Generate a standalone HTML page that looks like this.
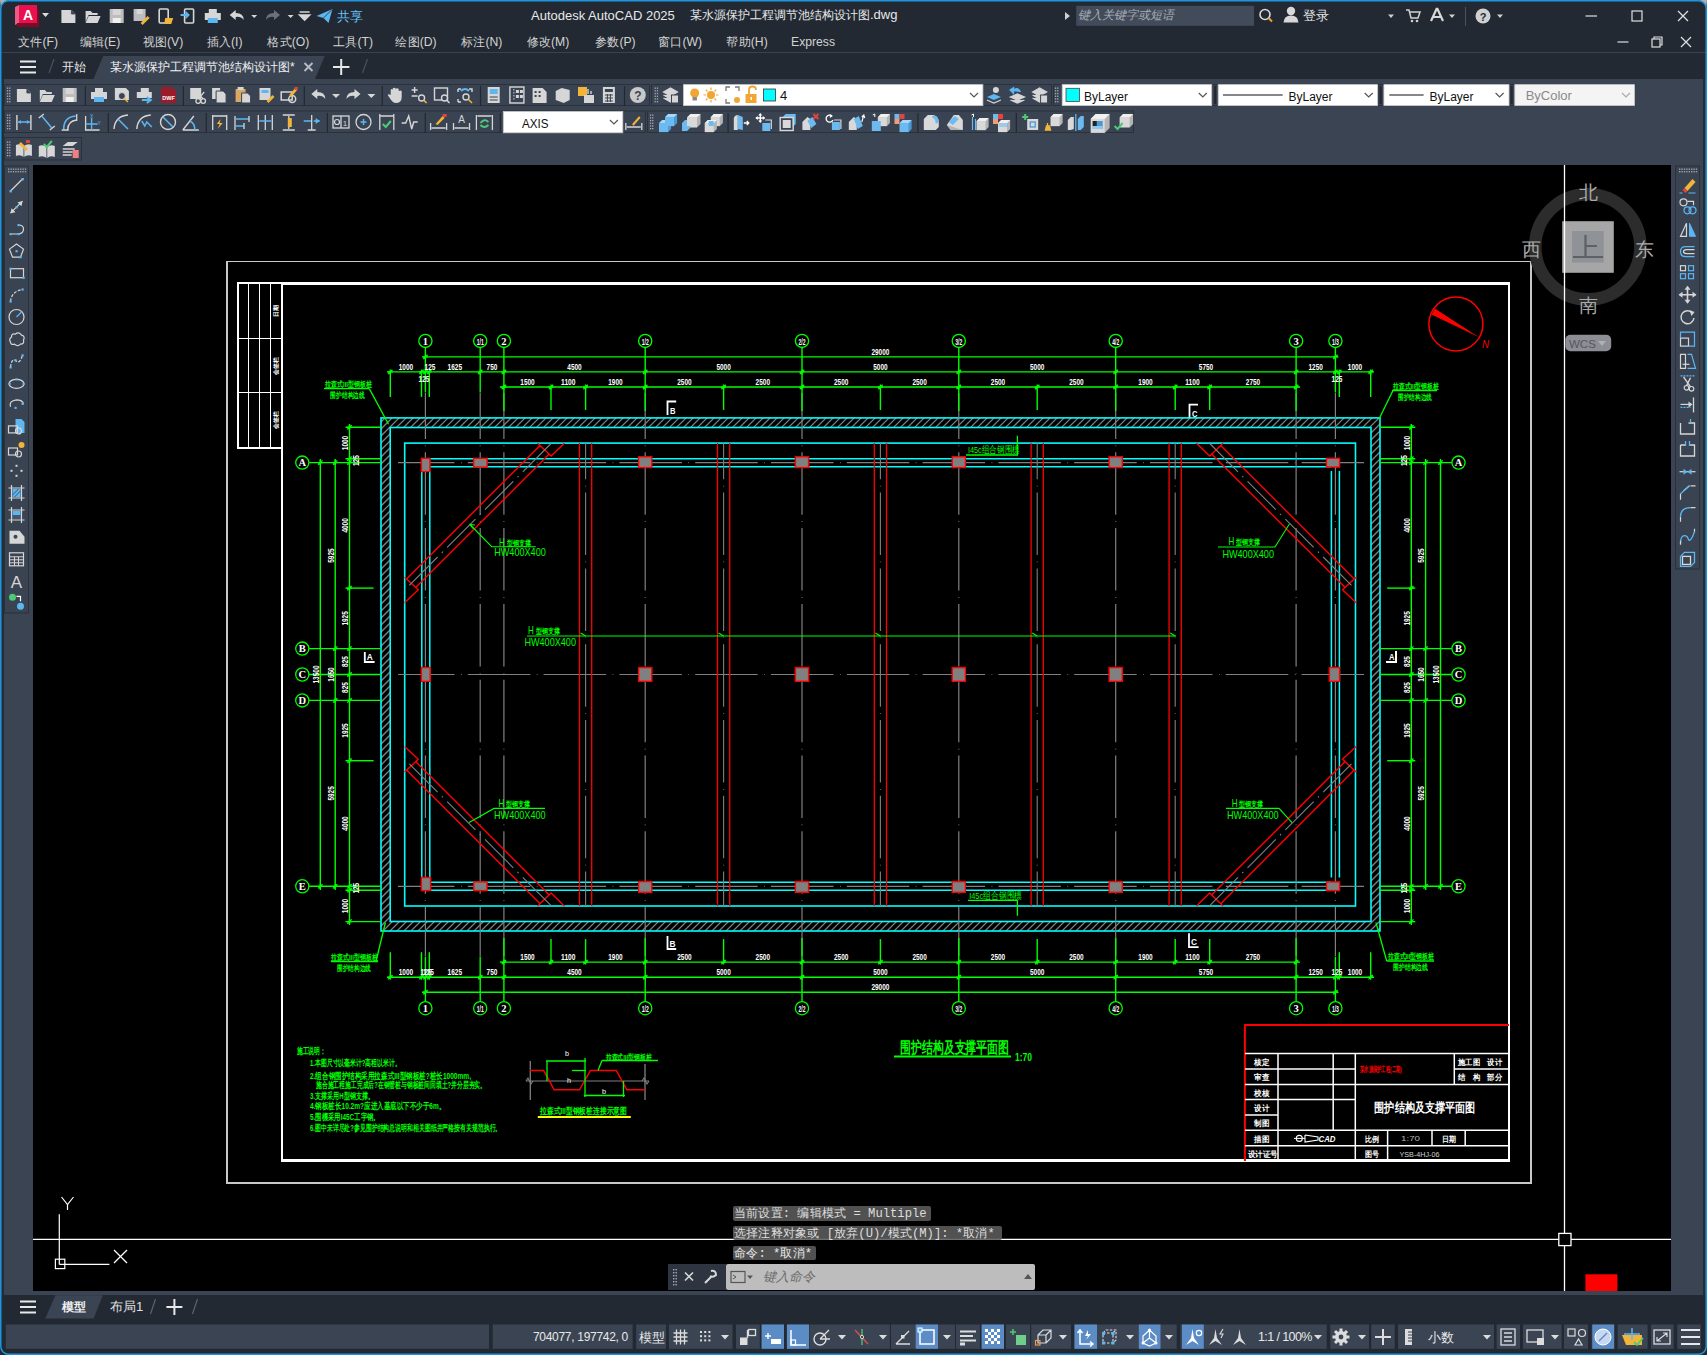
<!DOCTYPE html><html><head><meta charset="utf-8"><style>body{margin:0;width:1707px;height:1355px;overflow:hidden;background:#222933;font-family:"Liberation Sans",sans-serif;position:relative}svg{overflow:hidden}</style></head><body>
<div style="position:absolute;left:0px;top:0px;width:1707px;height:1355px;background:#222933"></div>
<div style="position:absolute;left:0px;top:79px;width:1707px;height:86px;background:#3b4453"></div>
<div style="position:absolute;left:0px;top:165px;width:33px;height:1126px;background:#3b4453"></div>
<div style="position:absolute;left:1671px;top:165px;width:36px;height:1126px;background:#3b4453"></div>
<div style="position:absolute;left:33px;top:165px;width:1638px;height:1126px;background:#000"></div>
<div style="position:absolute;left:0px;top:52px;width:1707px;height:1px;background:#3a4250"></div>
<svg width="1707" height="1355" style="position:absolute;left:0;top:0" font-family='"Liberation Sans", sans-serif'>
<defs><clipPath id="dclip"><rect x="33" y="165" width="1638" height="1126"/></clipPath><clipPath id="hclip"><path d="M381,417.9 H1380 V931 H381 Z M390.2,427.5 V921.5 H1371 V427.5 Z" clip-rule="evenodd"/></clipPath></defs>
<g clip-path="url(#dclip)" shape-rendering="crispEdges">
<rect x="227.0" y="261.5" width="1304.0" height="921.5" stroke="#c8c8c8" stroke-width="1.2" fill="none" />
<rect x="282.0" y="283.5" width="1227.0" height="877.0" stroke="#ffffff" stroke-width="2.5" fill="none" />
<rect x="237.5" y="282.5" width="44.0" height="165.5" stroke="#ffffff" stroke-width="2" fill="none" />
<line x1="248.6" y1="284.0" x2="248.6" y2="448.0" stroke="#ffffff" stroke-width="1" />
<line x1="259.8" y1="284.0" x2="259.8" y2="448.0" stroke="#ffffff" stroke-width="1" />
<line x1="270.8" y1="284.0" x2="270.8" y2="448.0" stroke="#ffffff" stroke-width="1" />
<line x1="237.0" y1="338.0" x2="281.0" y2="338.0" stroke="#ffffff" stroke-width="1" />
<line x1="237.0" y1="392.5" x2="281.0" y2="392.5" stroke="#ffffff" stroke-width="1" />
</g>
<g clip-path="url(#dclip)">
<path d="M-219,931 L295,417 M-212,931 L302,417 M-205,931 L309,417 M-198,931 L316,417 M-191,931 L323,417 M-184,931 L330,417 M-177,931 L337,417 M-170,931 L344,417 M-163,931 L351,417 M-156,931 L358,417 M-149,931 L365,417 M-142,931 L372,417 M-135,931 L379,417 M-128,931 L386,417 M-121,931 L393,417 M-114,931 L400,417 M-107,931 L407,417 M-100,931 L414,417 M-93,931 L421,417 M-86,931 L428,417 M-79,931 L435,417 M-72,931 L442,417 M-65,931 L449,417 M-58,931 L456,417 M-51,931 L463,417 M-44,931 L470,417 M-37,931 L477,417 M-30,931 L484,417 M-23,931 L491,417 M-16,931 L498,417 M-9,931 L505,417 M-2,931 L512,417 M5,931 L519,417 M12,931 L526,417 M19,931 L533,417 M26,931 L540,417 M33,931 L547,417 M40,931 L554,417 M47,931 L561,417 M54,931 L568,417 M61,931 L575,417 M68,931 L582,417 M75,931 L589,417 M82,931 L596,417 M89,931 L603,417 M96,931 L610,417 M103,931 L617,417 M110,931 L624,417 M117,931 L631,417 M124,931 L638,417 M131,931 L645,417 M138,931 L652,417 M145,931 L659,417 M152,931 L666,417 M159,931 L673,417 M166,931 L680,417 M173,931 L687,417 M180,931 L694,417 M187,931 L701,417 M194,931 L708,417 M201,931 L715,417 M208,931 L722,417 M215,931 L729,417 M222,931 L736,417 M229,931 L743,417 M236,931 L750,417 M243,931 L757,417 M250,931 L764,417 M257,931 L771,417 M264,931 L778,417 M271,931 L785,417 M278,931 L792,417 M285,931 L799,417 M292,931 L806,417 M299,931 L813,417 M306,931 L820,417 M313,931 L827,417 M320,931 L834,417 M327,931 L841,417 M334,931 L848,417 M341,931 L855,417 M348,931 L862,417 M355,931 L869,417 M362,931 L876,417 M369,931 L883,417 M376,931 L890,417 M383,931 L897,417 M390,931 L904,417 M397,931 L911,417 M404,931 L918,417 M411,931 L925,417 M418,931 L932,417 M425,931 L939,417 M432,931 L946,417 M439,931 L953,417 M446,931 L960,417 M453,931 L967,417 M460,931 L974,417 M467,931 L981,417 M474,931 L988,417 M481,931 L995,417 M488,931 L1002,417 M495,931 L1009,417 M502,931 L1016,417 M509,931 L1023,417 M516,931 L1030,417 M523,931 L1037,417 M530,931 L1044,417 M537,931 L1051,417 M544,931 L1058,417 M551,931 L1065,417 M558,931 L1072,417 M565,931 L1079,417 M572,931 L1086,417 M579,931 L1093,417 M586,931 L1100,417 M593,931 L1107,417 M600,931 L1114,417 M607,931 L1121,417 M614,931 L1128,417 M621,931 L1135,417 M628,931 L1142,417 M635,931 L1149,417 M642,931 L1156,417 M649,931 L1163,417 M656,931 L1170,417 M663,931 L1177,417 M670,931 L1184,417 M677,931 L1191,417 M684,931 L1198,417 M691,931 L1205,417 M698,931 L1212,417 M705,931 L1219,417 M712,931 L1226,417 M719,931 L1233,417 M726,931 L1240,417 M733,931 L1247,417 M740,931 L1254,417 M747,931 L1261,417 M754,931 L1268,417 M761,931 L1275,417 M768,931 L1282,417 M775,931 L1289,417 M782,931 L1296,417 M789,931 L1303,417 M796,931 L1310,417 M803,931 L1317,417 M810,931 L1324,417 M817,931 L1331,417 M824,931 L1338,417 M831,931 L1345,417 M838,931 L1352,417 M845,931 L1359,417 M852,931 L1366,417 M859,931 L1373,417 M866,931 L1380,417 M873,931 L1387,417 M880,931 L1394,417 M887,931 L1401,417 M894,931 L1408,417 M901,931 L1415,417 M908,931 L1422,417 M915,931 L1429,417 M922,931 L1436,417 M929,931 L1443,417 M936,931 L1450,417 M943,931 L1457,417 M950,931 L1464,417 M957,931 L1471,417 M964,931 L1478,417 M971,931 L1485,417 M978,931 L1492,417 M985,931 L1499,417 M992,931 L1506,417 M999,931 L1513,417 M1006,931 L1520,417 M1013,931 L1527,417 M1020,931 L1534,417 M1027,931 L1541,417 M1034,931 L1548,417 M1041,931 L1555,417 M1048,931 L1562,417 M1055,931 L1569,417 M1062,931 L1576,417 M1069,931 L1583,417 M1076,931 L1590,417 M1083,931 L1597,417 M1090,931 L1604,417 M1097,931 L1611,417 M1104,931 L1618,417 M1111,931 L1625,417 M1118,931 L1632,417 M1125,931 L1639,417 M1132,931 L1646,417 M1139,931 L1653,417 M1146,931 L1660,417 M1153,931 L1667,417 M1160,931 L1674,417 M1167,931 L1681,417 M1174,931 L1688,417 M1181,931 L1695,417 M1188,931 L1702,417 M1195,931 L1709,417 M1202,931 L1716,417 M1209,931 L1723,417 M1216,931 L1730,417 M1223,931 L1737,417 M1230,931 L1744,417 M1237,931 L1751,417 M1244,931 L1758,417 M1251,931 L1765,417 M1258,931 L1772,417 M1265,931 L1779,417 M1272,931 L1786,417 M1279,931 L1793,417 M1286,931 L1800,417 M1293,931 L1807,417 M1300,931 L1814,417 M1307,931 L1821,417 M1314,931 L1828,417 M1321,931 L1835,417 M1328,931 L1842,417 M1335,931 L1849,417 M1342,931 L1856,417 M1349,931 L1863,417 M1356,931 L1870,417 M1363,931 L1877,417 M1370,931 L1884,417 M1377,931 L1891,417 M1384,931 L1898,417 M1391,931 L1905,417 M1398,931 L1912,417 M1405,931 L1919,417 M1412,931 L1926,417 M1419,931 L1933,417 M1426,931 L1940,417 M1433,931 L1947,417 M1440,931 L1954,417 M1447,931 L1961,417 M1454,931 L1968,417 M1461,931 L1975,417 M1468,931 L1982,417 M1475,931 L1989,417" stroke="#808080" stroke-width="1.25" clip-path="url(#hclip)"/>
<rect x="381.0" y="417.9" width="999.0" height="513.1" stroke="#00ffff" stroke-width="1.6" fill="none" />
<rect x="390.2" y="427.5" width="980.8" height="494.0" stroke="#00ffff" stroke-width="1.6" fill="none" />
<rect x="404.7" y="443.1" width="950.8" height="462.9" stroke="#00ffff" stroke-width="1.6" fill="none" />
<line x1="430.3" y1="458.8" x2="1331.0" y2="458.8" stroke="#00ffff" stroke-width="1.5" />
<line x1="430.3" y1="466.7" x2="1331.0" y2="466.7" stroke="#00ffff" stroke-width="1.5" />
<line x1="430.3" y1="882.3" x2="1331.0" y2="882.3" stroke="#00ffff" stroke-width="1.5" />
<line x1="430.3" y1="890.3" x2="1331.0" y2="890.3" stroke="#00ffff" stroke-width="1.5" />
<line x1="421.8" y1="471.0" x2="421.8" y2="877.5" stroke="#00ffff" stroke-width="1.5" />
<line x1="429.8" y1="471.0" x2="429.8" y2="877.5" stroke="#00ffff" stroke-width="1.5" />
<line x1="1331.4" y1="471.0" x2="1331.4" y2="877.5" stroke="#00ffff" stroke-width="1.5" />
<line x1="1339.4" y1="471.0" x2="1339.4" y2="877.5" stroke="#00ffff" stroke-width="1.5" />
<line x1="425.4" y1="393.0" x2="425.4" y2="956.0" stroke="#808080" stroke-width="1.2" stroke-dasharray="62.5 6.5 0.7 6.1" stroke-dashoffset="16.5"/>
<line x1="480.2" y1="393.0" x2="480.2" y2="956.0" stroke="#808080" stroke-width="1.2" stroke-dasharray="62.5 6.5 0.7 6.1" stroke-dashoffset="16.5"/>
<line x1="503.9" y1="393.0" x2="503.9" y2="956.0" stroke="#808080" stroke-width="1.2" stroke-dasharray="62.5 6.5 0.7 6.1" stroke-dashoffset="16.5"/>
<line x1="645.2" y1="393.0" x2="645.2" y2="956.0" stroke="#808080" stroke-width="1.2" stroke-dasharray="62.5 6.5 0.7 6.1" stroke-dashoffset="16.5"/>
<line x1="802.0" y1="393.0" x2="802.0" y2="956.0" stroke="#808080" stroke-width="1.2" stroke-dasharray="62.5 6.5 0.7 6.1" stroke-dashoffset="16.5"/>
<line x1="958.8" y1="393.0" x2="958.8" y2="956.0" stroke="#808080" stroke-width="1.2" stroke-dasharray="62.5 6.5 0.7 6.1" stroke-dashoffset="16.5"/>
<line x1="1115.7" y1="393.0" x2="1115.7" y2="956.0" stroke="#808080" stroke-width="1.2" stroke-dasharray="62.5 6.5 0.7 6.1" stroke-dashoffset="16.5"/>
<line x1="1296.1" y1="393.0" x2="1296.1" y2="956.0" stroke="#808080" stroke-width="1.2" stroke-dasharray="62.5 6.5 0.7 6.1" stroke-dashoffset="16.5"/>
<line x1="1335.4" y1="393.0" x2="1335.4" y2="956.0" stroke="#808080" stroke-width="1.2" stroke-dasharray="62.5 6.5 0.7 6.1" stroke-dashoffset="16.5"/>
<line x1="398.0" y1="462.6" x2="1364.0" y2="462.6" stroke="#808080" stroke-width="1.2" stroke-dasharray="62.5 6.5 0.7 6.1" stroke-dashoffset="6"/>
<line x1="398.0" y1="674.5" x2="1364.0" y2="674.5" stroke="#808080" stroke-width="1.2" stroke-dasharray="62.5 6.5 0.7 6.1" stroke-dashoffset="6"/>
<line x1="398.0" y1="886.3" x2="1364.0" y2="886.3" stroke="#808080" stroke-width="1.2" stroke-dasharray="62.5 6.5 0.7 6.1" stroke-dashoffset="6"/>
<line x1="579.5" y1="443.0" x2="579.5" y2="906.0" stroke="#ff0000" stroke-width="1.3" />
<line x1="591.7" y1="443.0" x2="591.7" y2="906.0" stroke="#ff0000" stroke-width="1.3" />
<line x1="585.6" y1="443.0" x2="585.6" y2="906.0" stroke="#808080" stroke-width="1.1" stroke-dasharray="62.5 6.5 0.7 6.1" stroke-dashoffset="26.2"/>
<line x1="717.5" y1="443.0" x2="717.5" y2="906.0" stroke="#ff0000" stroke-width="1.3" />
<line x1="729.7" y1="443.0" x2="729.7" y2="906.0" stroke="#ff0000" stroke-width="1.3" />
<line x1="723.6" y1="443.0" x2="723.6" y2="906.0" stroke="#808080" stroke-width="1.1" stroke-dasharray="62.5 6.5 0.7 6.1" stroke-dashoffset="26.2"/>
<line x1="874.3" y1="443.0" x2="874.3" y2="906.0" stroke="#ff0000" stroke-width="1.3" />
<line x1="886.5" y1="443.0" x2="886.5" y2="906.0" stroke="#ff0000" stroke-width="1.3" />
<line x1="880.4" y1="443.0" x2="880.4" y2="906.0" stroke="#808080" stroke-width="1.1" stroke-dasharray="62.5 6.5 0.7 6.1" stroke-dashoffset="26.2"/>
<line x1="1031.1" y1="443.0" x2="1031.1" y2="906.0" stroke="#ff0000" stroke-width="1.3" />
<line x1="1043.3" y1="443.0" x2="1043.3" y2="906.0" stroke="#ff0000" stroke-width="1.3" />
<line x1="1037.2" y1="443.0" x2="1037.2" y2="906.0" stroke="#808080" stroke-width="1.1" stroke-dasharray="62.5 6.5 0.7 6.1" stroke-dashoffset="26.2"/>
<line x1="1169.1" y1="443.0" x2="1169.1" y2="906.0" stroke="#ff0000" stroke-width="1.3" />
<line x1="1181.3" y1="443.0" x2="1181.3" y2="906.0" stroke="#ff0000" stroke-width="1.3" />
<line x1="1175.2" y1="443.0" x2="1175.2" y2="906.0" stroke="#808080" stroke-width="1.1" stroke-dasharray="62.5 6.5 0.7 6.1" stroke-dashoffset="26.2"/>
<polyline points="540.1,445.4 406.8,578.8" fill="none" stroke="#ff0000" stroke-width="1.4" /><polyline points="549.0,454.3 415.6,587.6" fill="none" stroke="#ff0000" stroke-width="1.4" /><polyline points="537.7,443.2 551.1,456.1 564.3,443.2" fill="none" stroke="#ff0000" stroke-width="1.4" /><polyline points="404.6,577.2 418.3,589.8 404.6,602.7" fill="none" stroke="#ff0000" stroke-width="1.4" /><polyline points="551.1,443.5 404.6,590.0" fill="none" stroke="#808080" stroke-width="1.1" stroke-dasharray="40 6 1.5 6"/>
<polyline points="540.1,903.7 406.8,770.3" fill="none" stroke="#ff0000" stroke-width="1.4" /><polyline points="549.0,894.8 415.6,761.5" fill="none" stroke="#ff0000" stroke-width="1.4" /><polyline points="537.7,905.9 551.1,893.0 564.3,905.9" fill="none" stroke="#ff0000" stroke-width="1.4" /><polyline points="404.6,771.9 418.3,759.3 404.6,746.4" fill="none" stroke="#ff0000" stroke-width="1.4" /><polyline points="551.1,905.6 404.6,759.1" fill="none" stroke="#808080" stroke-width="1.1" stroke-dasharray="40 6 1.5 6"/>
<polyline points="1220.7,445.4 1354.0,578.8" fill="none" stroke="#ff0000" stroke-width="1.4" /><polyline points="1211.8,454.3 1345.2,587.6" fill="none" stroke="#ff0000" stroke-width="1.4" /><polyline points="1223.1,443.2 1209.7,456.1 1196.5,443.2" fill="none" stroke="#ff0000" stroke-width="1.4" /><polyline points="1356.2,577.2 1342.5,589.8 1356.2,602.7" fill="none" stroke="#ff0000" stroke-width="1.4" /><polyline points="1209.7,443.5 1356.2,590.0" fill="none" stroke="#808080" stroke-width="1.1" stroke-dasharray="40 6 1.5 6"/>
<polyline points="1220.7,903.7 1354.0,770.3" fill="none" stroke="#ff0000" stroke-width="1.4" /><polyline points="1211.8,894.8 1345.2,761.5" fill="none" stroke="#ff0000" stroke-width="1.4" /><polyline points="1223.1,905.9 1209.7,893.0 1196.5,905.9" fill="none" stroke="#ff0000" stroke-width="1.4" /><polyline points="1356.2,771.9 1342.5,759.3 1356.2,746.4" fill="none" stroke="#ff0000" stroke-width="1.4" /><polyline points="1209.7,905.6 1356.2,759.1" fill="none" stroke="#808080" stroke-width="1.1" stroke-dasharray="40 6 1.5 6"/>
<rect x="421.4" y="458.3" width="8.6" height="13.2" stroke="#ff0000" stroke-width="1.4" fill="#808080" />
<rect x="473.7" y="458.3" width="13.4" height="8.8" stroke="#ff0000" stroke-width="1.4" fill="#808080" />
<rect x="1326.5" y="458.3" width="13.1" height="8.8" stroke="#ff0000" stroke-width="1.4" fill="#808080" />
<rect x="638.6" y="456.8" width="13.2" height="10.8" stroke="#ff0000" stroke-width="1.4" fill="#808080" />
<rect x="795.4" y="456.8" width="13.2" height="10.8" stroke="#ff0000" stroke-width="1.4" fill="#808080" />
<rect x="952.2" y="456.8" width="13.2" height="10.8" stroke="#ff0000" stroke-width="1.4" fill="#808080" />
<rect x="1109.1" y="456.8" width="13.2" height="10.8" stroke="#ff0000" stroke-width="1.4" fill="#808080" />
<rect x="421.4" y="667.6" width="8.8" height="13.7" stroke="#ff0000" stroke-width="1.4" fill="#808080" />
<rect x="1329.4" y="667.6" width="10.2" height="13.7" stroke="#ff0000" stroke-width="1.4" fill="#808080" />
<rect x="638.6" y="667.6" width="13.2" height="13.7" stroke="#ff0000" stroke-width="1.4" fill="#808080" />
<rect x="795.4" y="667.6" width="13.2" height="13.7" stroke="#ff0000" stroke-width="1.4" fill="#808080" />
<rect x="952.2" y="667.6" width="13.2" height="13.7" stroke="#ff0000" stroke-width="1.4" fill="#808080" />
<rect x="1109.1" y="667.6" width="13.2" height="13.7" stroke="#ff0000" stroke-width="1.4" fill="#808080" />
<rect x="421.4" y="877.5" width="9.2" height="13.1" stroke="#ff0000" stroke-width="1.4" fill="#808080" />
<rect x="473.8" y="881.9" width="13.2" height="8.7" stroke="#ff0000" stroke-width="1.4" fill="#808080" />
<rect x="1326.5" y="881.9" width="13.1" height="8.7" stroke="#ff0000" stroke-width="1.4" fill="#808080" />
<rect x="638.6" y="881.6" width="13.2" height="10.7" stroke="#ff0000" stroke-width="1.4" fill="#808080" />
<rect x="795.4" y="881.6" width="13.2" height="10.7" stroke="#ff0000" stroke-width="1.4" fill="#808080" />
<rect x="952.2" y="881.6" width="13.2" height="10.7" stroke="#ff0000" stroke-width="1.4" fill="#808080" />
<rect x="1109.1" y="881.6" width="13.2" height="10.7" stroke="#ff0000" stroke-width="1.4" fill="#808080" />
</g>
<g clip-path="url(#dclip)">
<line x1="425.4" y1="347.5" x2="425.4" y2="392.5" stroke="#00ff00" stroke-width="1.4" />
<line x1="425.4" y1="1001.6" x2="425.4" y2="956.6" stroke="#00ff00" stroke-width="1.4" />
<circle cx="425.4" cy="340.9" r="6.6" stroke="#00ff00" stroke-width="1.3" fill="none"/><text x="425.4" y="344.7" font-size="10.5" fill="#ffffff" text-anchor="middle" font-family="Liberation Serif" font-weight="bold">1</text>
<circle cx="425.4" cy="1008.2" r="6.6" stroke="#00ff00" stroke-width="1.3" fill="none"/><text x="425.4" y="1012.0" font-size="10.5" fill="#ffffff" text-anchor="middle" font-family="Liberation Serif" font-weight="bold">1</text>
<line x1="480.2" y1="347.5" x2="480.2" y2="392.5" stroke="#00ff00" stroke-width="1.4" />
<line x1="480.2" y1="1001.6" x2="480.2" y2="956.6" stroke="#00ff00" stroke-width="1.4" />
<circle cx="480.2" cy="340.9" r="6.6" stroke="#00ff00" stroke-width="1.3" fill="none"/><text x="480.2" y="344.5" font-size="9" fill="#ffffff" text-anchor="middle" font-weight="bold" textLength="7" lengthAdjust="spacingAndGlyphs">1/1</text>
<circle cx="480.2" cy="1008.2" r="6.6" stroke="#00ff00" stroke-width="1.3" fill="none"/><text x="480.2" y="1011.8" font-size="9" fill="#ffffff" text-anchor="middle" font-weight="bold" textLength="7" lengthAdjust="spacingAndGlyphs">1/1</text>
<line x1="503.9" y1="347.5" x2="503.9" y2="411.0" stroke="#00ff00" stroke-width="1.4" />
<line x1="503.9" y1="1001.6" x2="503.9" y2="938.1" stroke="#00ff00" stroke-width="1.4" />
<circle cx="503.9" cy="340.9" r="6.6" stroke="#00ff00" stroke-width="1.3" fill="none"/><text x="503.9" y="344.7" font-size="10.5" fill="#ffffff" text-anchor="middle" font-family="Liberation Serif" font-weight="bold">2</text>
<circle cx="503.9" cy="1008.2" r="6.6" stroke="#00ff00" stroke-width="1.3" fill="none"/><text x="503.9" y="1012.0" font-size="10.5" fill="#ffffff" text-anchor="middle" font-family="Liberation Serif" font-weight="bold">2</text>
<line x1="645.2" y1="347.5" x2="645.2" y2="411.0" stroke="#00ff00" stroke-width="1.4" />
<line x1="645.2" y1="1001.6" x2="645.2" y2="938.1" stroke="#00ff00" stroke-width="1.4" />
<circle cx="645.2" cy="340.9" r="6.6" stroke="#00ff00" stroke-width="1.3" fill="none"/><text x="645.2" y="344.5" font-size="9" fill="#ffffff" text-anchor="middle" font-weight="bold" textLength="7" lengthAdjust="spacingAndGlyphs">1/2</text>
<circle cx="645.2" cy="1008.2" r="6.6" stroke="#00ff00" stroke-width="1.3" fill="none"/><text x="645.2" y="1011.8" font-size="9" fill="#ffffff" text-anchor="middle" font-weight="bold" textLength="7" lengthAdjust="spacingAndGlyphs">1/2</text>
<line x1="802.0" y1="347.5" x2="802.0" y2="411.0" stroke="#00ff00" stroke-width="1.4" />
<line x1="802.0" y1="1001.6" x2="802.0" y2="938.1" stroke="#00ff00" stroke-width="1.4" />
<circle cx="802.0" cy="340.9" r="6.6" stroke="#00ff00" stroke-width="1.3" fill="none"/><text x="802.0" y="344.5" font-size="9" fill="#ffffff" text-anchor="middle" font-weight="bold" textLength="7" lengthAdjust="spacingAndGlyphs">2/2</text>
<circle cx="802.0" cy="1008.2" r="6.6" stroke="#00ff00" stroke-width="1.3" fill="none"/><text x="802.0" y="1011.8" font-size="9" fill="#ffffff" text-anchor="middle" font-weight="bold" textLength="7" lengthAdjust="spacingAndGlyphs">2/2</text>
<line x1="958.8" y1="347.5" x2="958.8" y2="411.0" stroke="#00ff00" stroke-width="1.4" />
<line x1="958.8" y1="1001.6" x2="958.8" y2="938.1" stroke="#00ff00" stroke-width="1.4" />
<circle cx="958.8" cy="340.9" r="6.6" stroke="#00ff00" stroke-width="1.3" fill="none"/><text x="958.8" y="344.5" font-size="9" fill="#ffffff" text-anchor="middle" font-weight="bold" textLength="7" lengthAdjust="spacingAndGlyphs">3/2</text>
<circle cx="958.8" cy="1008.2" r="6.6" stroke="#00ff00" stroke-width="1.3" fill="none"/><text x="958.8" y="1011.8" font-size="9" fill="#ffffff" text-anchor="middle" font-weight="bold" textLength="7" lengthAdjust="spacingAndGlyphs">3/2</text>
<line x1="1115.7" y1="347.5" x2="1115.7" y2="411.0" stroke="#00ff00" stroke-width="1.4" />
<line x1="1115.7" y1="1001.6" x2="1115.7" y2="938.1" stroke="#00ff00" stroke-width="1.4" />
<circle cx="1115.7" cy="340.9" r="6.6" stroke="#00ff00" stroke-width="1.3" fill="none"/><text x="1115.7" y="344.5" font-size="9" fill="#ffffff" text-anchor="middle" font-weight="bold" textLength="7" lengthAdjust="spacingAndGlyphs">4/2</text>
<circle cx="1115.7" cy="1008.2" r="6.6" stroke="#00ff00" stroke-width="1.3" fill="none"/><text x="1115.7" y="1011.8" font-size="9" fill="#ffffff" text-anchor="middle" font-weight="bold" textLength="7" lengthAdjust="spacingAndGlyphs">4/2</text>
<line x1="1296.1" y1="347.5" x2="1296.1" y2="411.0" stroke="#00ff00" stroke-width="1.4" />
<line x1="1296.1" y1="1001.6" x2="1296.1" y2="938.1" stroke="#00ff00" stroke-width="1.4" />
<circle cx="1296.1" cy="340.9" r="6.6" stroke="#00ff00" stroke-width="1.3" fill="none"/><text x="1296.1" y="344.7" font-size="10.5" fill="#ffffff" text-anchor="middle" font-family="Liberation Serif" font-weight="bold">3</text>
<circle cx="1296.1" cy="1008.2" r="6.6" stroke="#00ff00" stroke-width="1.3" fill="none"/><text x="1296.1" y="1012.0" font-size="10.5" fill="#ffffff" text-anchor="middle" font-family="Liberation Serif" font-weight="bold">3</text>
<line x1="1335.4" y1="347.5" x2="1335.4" y2="392.5" stroke="#00ff00" stroke-width="1.4" />
<line x1="1335.4" y1="1001.6" x2="1335.4" y2="956.6" stroke="#00ff00" stroke-width="1.4" />
<circle cx="1335.4" cy="340.9" r="6.6" stroke="#00ff00" stroke-width="1.3" fill="none"/><text x="1335.4" y="344.5" font-size="9" fill="#ffffff" text-anchor="middle" font-weight="bold" textLength="7" lengthAdjust="spacingAndGlyphs">1/3</text>
<circle cx="1335.4" cy="1008.2" r="6.6" stroke="#00ff00" stroke-width="1.3" fill="none"/><text x="1335.4" y="1011.8" font-size="9" fill="#ffffff" text-anchor="middle" font-weight="bold" textLength="7" lengthAdjust="spacingAndGlyphs">1/3</text>
<line x1="308.9" y1="462.6" x2="381.0" y2="462.6" stroke="#00ff00" stroke-width="1.4" />
<line x1="1379.8" y1="462.6" x2="1451.9" y2="462.6" stroke="#00ff00" stroke-width="1.4" />
<circle cx="302.3" cy="462.6" r="6.6" stroke="#00ff00" stroke-width="1.3" fill="none"/><text x="302.3" y="466.4" font-size="10.5" fill="#ffffff" text-anchor="middle" font-family="Liberation Serif" font-weight="bold">A</text>
<circle cx="1458.5" cy="462.6" r="6.6" stroke="#00ff00" stroke-width="1.3" fill="none"/><text x="1458.5" y="466.4" font-size="10.5" fill="#ffffff" text-anchor="middle" font-family="Liberation Serif" font-weight="bold">A</text>
<line x1="308.9" y1="648.6" x2="381.0" y2="648.6" stroke="#00ff00" stroke-width="1.4" />
<line x1="1379.8" y1="648.6" x2="1451.9" y2="648.6" stroke="#00ff00" stroke-width="1.4" />
<circle cx="302.3" cy="648.6" r="6.6" stroke="#00ff00" stroke-width="1.3" fill="none"/><text x="302.3" y="652.4" font-size="10.5" fill="#ffffff" text-anchor="middle" font-family="Liberation Serif" font-weight="bold">B</text>
<circle cx="1458.5" cy="648.6" r="6.6" stroke="#00ff00" stroke-width="1.3" fill="none"/><text x="1458.5" y="652.4" font-size="10.5" fill="#ffffff" text-anchor="middle" font-family="Liberation Serif" font-weight="bold">B</text>
<line x1="308.9" y1="674.5" x2="381.0" y2="674.5" stroke="#00ff00" stroke-width="1.4" />
<line x1="1379.8" y1="674.5" x2="1451.9" y2="674.5" stroke="#00ff00" stroke-width="1.4" />
<circle cx="302.3" cy="674.5" r="6.6" stroke="#00ff00" stroke-width="1.3" fill="none"/><text x="302.3" y="678.3" font-size="10.5" fill="#ffffff" text-anchor="middle" font-family="Liberation Serif" font-weight="bold">C</text>
<circle cx="1458.5" cy="674.5" r="6.6" stroke="#00ff00" stroke-width="1.3" fill="none"/><text x="1458.5" y="678.3" font-size="10.5" fill="#ffffff" text-anchor="middle" font-family="Liberation Serif" font-weight="bold">C</text>
<line x1="308.9" y1="700.4" x2="381.0" y2="700.4" stroke="#00ff00" stroke-width="1.4" />
<line x1="1379.8" y1="700.4" x2="1451.9" y2="700.4" stroke="#00ff00" stroke-width="1.4" />
<circle cx="302.3" cy="700.4" r="6.6" stroke="#00ff00" stroke-width="1.3" fill="none"/><text x="302.3" y="704.2" font-size="10.5" fill="#ffffff" text-anchor="middle" font-family="Liberation Serif" font-weight="bold">D</text>
<circle cx="1458.5" cy="700.4" r="6.6" stroke="#00ff00" stroke-width="1.3" fill="none"/><text x="1458.5" y="704.2" font-size="10.5" fill="#ffffff" text-anchor="middle" font-family="Liberation Serif" font-weight="bold">D</text>
<line x1="308.9" y1="886.3" x2="381.0" y2="886.3" stroke="#00ff00" stroke-width="1.4" />
<line x1="1379.8" y1="886.3" x2="1451.9" y2="886.3" stroke="#00ff00" stroke-width="1.4" />
<circle cx="302.3" cy="886.3" r="6.6" stroke="#00ff00" stroke-width="1.3" fill="none"/><text x="302.3" y="890.1" font-size="10.5" fill="#ffffff" text-anchor="middle" font-family="Liberation Serif" font-weight="bold">E</text>
<circle cx="1458.5" cy="886.3" r="6.6" stroke="#00ff00" stroke-width="1.3" fill="none"/><text x="1458.5" y="890.1" font-size="10.5" fill="#ffffff" text-anchor="middle" font-family="Liberation Serif" font-weight="bold">E</text>
<line x1="422.0" y1="356.9" x2="1338.5" y2="356.9" stroke="#00ff00" stroke-width="1.4" />
<path d="M423.2,359.1 L427.6,354.7 M422.9,356.9 H427.9 M425.4,354.4 V359.4" stroke="#00ff00" stroke-width="1.3"/>
<path d="M1333.2,359.1 L1337.6,354.7 M1332.9,356.9 H1337.9 M1335.4,354.4 V359.4" stroke="#00ff00" stroke-width="1.3"/>
<text x="880.4" y="354.9" font-size="8.5" fill="#ffffff" font-weight="bold" text-anchor="middle" textLength="18.0" lengthAdjust="spacingAndGlyphs">29000</text>
<line x1="387.0" y1="371.9" x2="1374.0" y2="371.9" stroke="#00ff00" stroke-width="1.4" />
<path d="M388.1,374.1 L392.5,369.7 M387.8,371.9 H392.8 M390.3,369.4 V374.4" stroke="#00ff00" stroke-width="1.3"/>
<path d="M419.3,374.1 L423.7,369.7 M419.0,371.9 H424.0 M421.5,369.4 V374.4" stroke="#00ff00" stroke-width="1.3"/>
<path d="M423.2,374.1 L427.6,369.7 M422.9,371.9 H427.9 M425.4,369.4 V374.4" stroke="#00ff00" stroke-width="1.3"/>
<path d="M427.1,374.1 L431.5,369.7 M426.8,371.9 H431.8 M429.3,369.4 V374.4" stroke="#00ff00" stroke-width="1.3"/>
<path d="M478.0,374.1 L482.4,369.7 M477.7,371.9 H482.7 M480.2,369.4 V374.4" stroke="#00ff00" stroke-width="1.3"/>
<path d="M501.7,374.1 L506.1,369.7 M501.4,371.9 H506.4 M503.9,369.4 V374.4" stroke="#00ff00" stroke-width="1.3"/>
<path d="M643.0,374.1 L647.4,369.7 M642.7,371.9 H647.7 M645.2,369.4 V374.4" stroke="#00ff00" stroke-width="1.3"/>
<path d="M799.8,374.1 L804.2,369.7 M799.5,371.9 H804.5 M802.0,369.4 V374.4" stroke="#00ff00" stroke-width="1.3"/>
<path d="M956.6,374.1 L961.0,369.7 M956.3,371.9 H961.3 M958.8,369.4 V374.4" stroke="#00ff00" stroke-width="1.3"/>
<path d="M1113.5,374.1 L1117.9,369.7 M1113.2,371.9 H1118.2 M1115.7,369.4 V374.4" stroke="#00ff00" stroke-width="1.3"/>
<path d="M1293.9,374.1 L1298.3,369.7 M1293.6,371.9 H1298.6 M1296.1,369.4 V374.4" stroke="#00ff00" stroke-width="1.3"/>
<path d="M1333.2,374.1 L1337.6,369.7 M1332.9,371.9 H1337.9 M1335.4,369.4 V374.4" stroke="#00ff00" stroke-width="1.3"/>
<path d="M1337.1,374.1 L1341.5,369.7 M1336.8,371.9 H1341.8 M1339.3,369.4 V374.4" stroke="#00ff00" stroke-width="1.3"/>
<path d="M1368.5,374.1 L1372.9,369.7 M1368.2,371.9 H1373.2 M1370.7,369.4 V374.4" stroke="#00ff00" stroke-width="1.3"/>
<line x1="390.3" y1="371.9" x2="390.3" y2="396.9" stroke="#00ff00" stroke-width="1.4" />
<line x1="421.5" y1="371.9" x2="421.5" y2="396.9" stroke="#00ff00" stroke-width="1.4" />
<line x1="429.3" y1="371.9" x2="429.3" y2="396.9" stroke="#00ff00" stroke-width="1.4" />
<line x1="1339.3" y1="371.9" x2="1339.3" y2="396.9" stroke="#00ff00" stroke-width="1.4" />
<line x1="1370.7" y1="371.9" x2="1370.7" y2="396.9" stroke="#00ff00" stroke-width="1.4" />
<text x="405.9" y="370.1" font-size="8.5" fill="#ffffff" font-weight="bold" text-anchor="middle" textLength="14.4" lengthAdjust="spacingAndGlyphs">1000</text>
<text x="430.0" y="370.1" font-size="8.5" fill="#ffffff" font-weight="bold" text-anchor="middle" textLength="10.8" lengthAdjust="spacingAndGlyphs">125</text>
<text x="454.8" y="370.1" font-size="8.5" fill="#ffffff" font-weight="bold" text-anchor="middle" textLength="14.4" lengthAdjust="spacingAndGlyphs">1625</text>
<text x="492.0" y="370.1" font-size="8.5" fill="#ffffff" font-weight="bold" text-anchor="middle" textLength="10.8" lengthAdjust="spacingAndGlyphs">750</text>
<text x="574.5" y="370.1" font-size="8.5" fill="#ffffff" font-weight="bold" text-anchor="middle" textLength="14.4" lengthAdjust="spacingAndGlyphs">4500</text>
<text x="723.6" y="370.1" font-size="8.5" fill="#ffffff" font-weight="bold" text-anchor="middle" textLength="14.4" lengthAdjust="spacingAndGlyphs">5000</text>
<text x="880.4" y="370.1" font-size="8.5" fill="#ffffff" font-weight="bold" text-anchor="middle" textLength="14.4" lengthAdjust="spacingAndGlyphs">5000</text>
<text x="1037.2" y="370.1" font-size="8.5" fill="#ffffff" font-weight="bold" text-anchor="middle" textLength="14.4" lengthAdjust="spacingAndGlyphs">5000</text>
<text x="1206.0" y="370.1" font-size="8.5" fill="#ffffff" font-weight="bold" text-anchor="middle" textLength="14.4" lengthAdjust="spacingAndGlyphs">5750</text>
<text x="1315.7" y="370.1" font-size="8.5" fill="#ffffff" font-weight="bold" text-anchor="middle" textLength="14.4" lengthAdjust="spacingAndGlyphs">1250</text>
<text x="1355.0" y="370.1" font-size="8.5" fill="#ffffff" font-weight="bold" text-anchor="middle" textLength="14.4" lengthAdjust="spacingAndGlyphs">1000</text>
<text x="424.0" y="381.9" font-size="8.5" fill="#ffffff" font-weight="bold" text-anchor="middle" textLength="10.8" lengthAdjust="spacingAndGlyphs">125</text>
<text x="1337.0" y="381.9" font-size="8.5" fill="#ffffff" font-weight="bold" text-anchor="middle" textLength="10.8" lengthAdjust="spacingAndGlyphs">125</text>
<line x1="500.0" y1="387.0" x2="1300.0" y2="387.0" stroke="#00ff00" stroke-width="1.4" />
<path d="M501.7,389.2 L506.1,384.8 M501.4,387.0 H506.4 M503.9,384.5 V389.5" stroke="#00ff00" stroke-width="1.3"/>
<path d="M548.8,389.2 L553.2,384.8 M548.5,387.0 H553.5 M551.0,384.5 V389.5" stroke="#00ff00" stroke-width="1.3"/>
<path d="M583.4,389.2 L587.8,384.8 M583.1,387.0 H588.1 M585.6,384.5 V389.5" stroke="#00ff00" stroke-width="1.3"/>
<path d="M643.0,389.2 L647.4,384.8 M642.7,387.0 H647.7 M645.2,384.5 V389.5" stroke="#00ff00" stroke-width="1.3"/>
<path d="M721.4,389.2 L725.8,384.8 M721.1,387.0 H726.1 M723.6,384.5 V389.5" stroke="#00ff00" stroke-width="1.3"/>
<path d="M799.8,389.2 L804.2,384.8 M799.5,387.0 H804.5 M802.0,384.5 V389.5" stroke="#00ff00" stroke-width="1.3"/>
<path d="M878.2,389.2 L882.6,384.8 M877.9,387.0 H882.9 M880.4,384.5 V389.5" stroke="#00ff00" stroke-width="1.3"/>
<path d="M956.6,389.2 L961.0,384.8 M956.3,387.0 H961.3 M958.8,384.5 V389.5" stroke="#00ff00" stroke-width="1.3"/>
<path d="M1035.0,389.2 L1039.4,384.8 M1034.7,387.0 H1039.7 M1037.2,384.5 V389.5" stroke="#00ff00" stroke-width="1.3"/>
<path d="M1113.5,389.2 L1117.9,384.8 M1113.2,387.0 H1118.2 M1115.7,384.5 V389.5" stroke="#00ff00" stroke-width="1.3"/>
<path d="M1173.0,389.2 L1177.4,384.8 M1172.7,387.0 H1177.7 M1175.2,384.5 V389.5" stroke="#00ff00" stroke-width="1.3"/>
<path d="M1207.5,389.2 L1211.9,384.8 M1207.2,387.0 H1212.2 M1209.7,384.5 V389.5" stroke="#00ff00" stroke-width="1.3"/>
<path d="M1293.9,389.2 L1298.3,384.8 M1293.6,387.0 H1298.6 M1296.1,384.5 V389.5" stroke="#00ff00" stroke-width="1.3"/>
<line x1="551.0" y1="387.0" x2="551.0" y2="410.0" stroke="#00ff00" stroke-width="1.4" />
<line x1="585.6" y1="387.0" x2="585.6" y2="410.0" stroke="#00ff00" stroke-width="1.4" />
<line x1="723.6" y1="387.0" x2="723.6" y2="410.0" stroke="#00ff00" stroke-width="1.4" />
<line x1="880.4" y1="387.0" x2="880.4" y2="410.0" stroke="#00ff00" stroke-width="1.4" />
<line x1="1037.2" y1="387.0" x2="1037.2" y2="410.0" stroke="#00ff00" stroke-width="1.4" />
<line x1="1175.2" y1="387.0" x2="1175.2" y2="410.0" stroke="#00ff00" stroke-width="1.4" />
<line x1="1209.7" y1="387.0" x2="1209.7" y2="410.0" stroke="#00ff00" stroke-width="1.4" />
<text x="527.5" y="385.2" font-size="8.5" fill="#ffffff" font-weight="bold" text-anchor="middle" textLength="14.4" lengthAdjust="spacingAndGlyphs">1500</text>
<text x="568.3" y="385.2" font-size="8.5" fill="#ffffff" font-weight="bold" text-anchor="middle" textLength="14.4" lengthAdjust="spacingAndGlyphs">1100</text>
<text x="615.4" y="385.2" font-size="8.5" fill="#ffffff" font-weight="bold" text-anchor="middle" textLength="14.4" lengthAdjust="spacingAndGlyphs">1900</text>
<text x="684.4" y="385.2" font-size="8.5" fill="#ffffff" font-weight="bold" text-anchor="middle" textLength="14.4" lengthAdjust="spacingAndGlyphs">2500</text>
<text x="762.8" y="385.2" font-size="8.5" fill="#ffffff" font-weight="bold" text-anchor="middle" textLength="14.4" lengthAdjust="spacingAndGlyphs">2500</text>
<text x="841.2" y="385.2" font-size="8.5" fill="#ffffff" font-weight="bold" text-anchor="middle" textLength="14.4" lengthAdjust="spacingAndGlyphs">2500</text>
<text x="919.6" y="385.2" font-size="8.5" fill="#ffffff" font-weight="bold" text-anchor="middle" textLength="14.4" lengthAdjust="spacingAndGlyphs">2500</text>
<text x="998.0" y="385.2" font-size="8.5" fill="#ffffff" font-weight="bold" text-anchor="middle" textLength="14.4" lengthAdjust="spacingAndGlyphs">2500</text>
<text x="1076.4" y="385.2" font-size="8.5" fill="#ffffff" font-weight="bold" text-anchor="middle" textLength="14.4" lengthAdjust="spacingAndGlyphs">2500</text>
<text x="1145.5" y="385.2" font-size="8.5" fill="#ffffff" font-weight="bold" text-anchor="middle" textLength="14.4" lengthAdjust="spacingAndGlyphs">1900</text>
<text x="1192.5" y="385.2" font-size="8.5" fill="#ffffff" font-weight="bold" text-anchor="middle" textLength="14.4" lengthAdjust="spacingAndGlyphs">1100</text>
<text x="1253.0" y="385.2" font-size="8.5" fill="#ffffff" font-weight="bold" text-anchor="middle" textLength="14.4" lengthAdjust="spacingAndGlyphs">2750</text>
<line x1="422.0" y1="992.2" x2="1338.5" y2="992.2" stroke="#00ff00" stroke-width="1.4" />
<path d="M423.2,994.4 L427.6,990.0 M422.9,992.2 H427.9 M425.4,989.7 V994.7" stroke="#00ff00" stroke-width="1.3"/>
<path d="M1333.2,994.4 L1337.6,990.0 M1332.9,992.2 H1337.9 M1335.4,989.7 V994.7" stroke="#00ff00" stroke-width="1.3"/>
<text x="880.4" y="990.2" font-size="8.5" fill="#ffffff" font-weight="bold" text-anchor="middle" textLength="18.0" lengthAdjust="spacingAndGlyphs">29000</text>
<line x1="387.0" y1="977.2" x2="1374.0" y2="977.2" stroke="#00ff00" stroke-width="1.4" />
<path d="M388.1,979.4 L392.5,975.0 M387.8,977.2 H392.8 M390.3,974.7 V979.7" stroke="#00ff00" stroke-width="1.3"/>
<path d="M419.3,979.4 L423.7,975.0 M419.0,977.2 H424.0 M421.5,974.7 V979.7" stroke="#00ff00" stroke-width="1.3"/>
<path d="M423.2,979.4 L427.6,975.0 M422.9,977.2 H427.9 M425.4,974.7 V979.7" stroke="#00ff00" stroke-width="1.3"/>
<path d="M427.1,979.4 L431.5,975.0 M426.8,977.2 H431.8 M429.3,974.7 V979.7" stroke="#00ff00" stroke-width="1.3"/>
<path d="M478.0,979.4 L482.4,975.0 M477.7,977.2 H482.7 M480.2,974.7 V979.7" stroke="#00ff00" stroke-width="1.3"/>
<path d="M501.7,979.4 L506.1,975.0 M501.4,977.2 H506.4 M503.9,974.7 V979.7" stroke="#00ff00" stroke-width="1.3"/>
<path d="M643.0,979.4 L647.4,975.0 M642.7,977.2 H647.7 M645.2,974.7 V979.7" stroke="#00ff00" stroke-width="1.3"/>
<path d="M799.8,979.4 L804.2,975.0 M799.5,977.2 H804.5 M802.0,974.7 V979.7" stroke="#00ff00" stroke-width="1.3"/>
<path d="M956.6,979.4 L961.0,975.0 M956.3,977.2 H961.3 M958.8,974.7 V979.7" stroke="#00ff00" stroke-width="1.3"/>
<path d="M1113.5,979.4 L1117.9,975.0 M1113.2,977.2 H1118.2 M1115.7,974.7 V979.7" stroke="#00ff00" stroke-width="1.3"/>
<path d="M1293.9,979.4 L1298.3,975.0 M1293.6,977.2 H1298.6 M1296.1,974.7 V979.7" stroke="#00ff00" stroke-width="1.3"/>
<path d="M1333.2,979.4 L1337.6,975.0 M1332.9,977.2 H1337.9 M1335.4,974.7 V979.7" stroke="#00ff00" stroke-width="1.3"/>
<path d="M1337.1,979.4 L1341.5,975.0 M1336.8,977.2 H1341.8 M1339.3,974.7 V979.7" stroke="#00ff00" stroke-width="1.3"/>
<path d="M1368.5,979.4 L1372.9,975.0 M1368.2,977.2 H1373.2 M1370.7,974.7 V979.7" stroke="#00ff00" stroke-width="1.3"/>
<line x1="390.3" y1="977.2" x2="390.3" y2="952.2" stroke="#00ff00" stroke-width="1.4" />
<line x1="421.5" y1="977.2" x2="421.5" y2="952.2" stroke="#00ff00" stroke-width="1.4" />
<line x1="429.3" y1="977.2" x2="429.3" y2="952.2" stroke="#00ff00" stroke-width="1.4" />
<line x1="1339.3" y1="977.2" x2="1339.3" y2="952.2" stroke="#00ff00" stroke-width="1.4" />
<line x1="1370.7" y1="977.2" x2="1370.7" y2="952.2" stroke="#00ff00" stroke-width="1.4" />
<text x="405.9" y="975.4" font-size="8.5" fill="#ffffff" font-weight="bold" text-anchor="middle" textLength="14.4" lengthAdjust="spacingAndGlyphs">1000</text>
<text x="426.0" y="975.4" font-size="8.5" fill="#ffffff" font-weight="bold" text-anchor="middle" textLength="10.8" lengthAdjust="spacingAndGlyphs">125</text>
<text x="454.8" y="975.4" font-size="8.5" fill="#ffffff" font-weight="bold" text-anchor="middle" textLength="14.4" lengthAdjust="spacingAndGlyphs">1625</text>
<text x="492.0" y="975.4" font-size="8.5" fill="#ffffff" font-weight="bold" text-anchor="middle" textLength="10.8" lengthAdjust="spacingAndGlyphs">750</text>
<text x="574.5" y="975.4" font-size="8.5" fill="#ffffff" font-weight="bold" text-anchor="middle" textLength="14.4" lengthAdjust="spacingAndGlyphs">4500</text>
<text x="723.6" y="975.4" font-size="8.5" fill="#ffffff" font-weight="bold" text-anchor="middle" textLength="14.4" lengthAdjust="spacingAndGlyphs">5000</text>
<text x="880.4" y="975.4" font-size="8.5" fill="#ffffff" font-weight="bold" text-anchor="middle" textLength="14.4" lengthAdjust="spacingAndGlyphs">5000</text>
<text x="1037.2" y="975.4" font-size="8.5" fill="#ffffff" font-weight="bold" text-anchor="middle" textLength="14.4" lengthAdjust="spacingAndGlyphs">5000</text>
<text x="1206.0" y="975.4" font-size="8.5" fill="#ffffff" font-weight="bold" text-anchor="middle" textLength="14.4" lengthAdjust="spacingAndGlyphs">5750</text>
<text x="1315.7" y="975.4" font-size="8.5" fill="#ffffff" font-weight="bold" text-anchor="middle" textLength="14.4" lengthAdjust="spacingAndGlyphs">1250</text>
<text x="1355.0" y="975.4" font-size="8.5" fill="#ffffff" font-weight="bold" text-anchor="middle" textLength="14.4" lengthAdjust="spacingAndGlyphs">1000</text>
<text x="428.5" y="975.4" font-size="8.5" fill="#ffffff" font-weight="bold" text-anchor="middle" textLength="10.8" lengthAdjust="spacingAndGlyphs">125</text>
<text x="1337.0" y="975.4" font-size="8.5" fill="#ffffff" font-weight="bold" text-anchor="middle" textLength="10.8" lengthAdjust="spacingAndGlyphs">125</text>
<line x1="500.0" y1="962.1" x2="1300.0" y2="962.1" stroke="#00ff00" stroke-width="1.4" />
<path d="M501.7,964.3 L506.1,959.9 M501.4,962.1 H506.4 M503.9,959.6 V964.6" stroke="#00ff00" stroke-width="1.3"/>
<path d="M548.8,964.3 L553.2,959.9 M548.5,962.1 H553.5 M551.0,959.6 V964.6" stroke="#00ff00" stroke-width="1.3"/>
<path d="M583.4,964.3 L587.8,959.9 M583.1,962.1 H588.1 M585.6,959.6 V964.6" stroke="#00ff00" stroke-width="1.3"/>
<path d="M643.0,964.3 L647.4,959.9 M642.7,962.1 H647.7 M645.2,959.6 V964.6" stroke="#00ff00" stroke-width="1.3"/>
<path d="M721.4,964.3 L725.8,959.9 M721.1,962.1 H726.1 M723.6,959.6 V964.6" stroke="#00ff00" stroke-width="1.3"/>
<path d="M799.8,964.3 L804.2,959.9 M799.5,962.1 H804.5 M802.0,959.6 V964.6" stroke="#00ff00" stroke-width="1.3"/>
<path d="M878.2,964.3 L882.6,959.9 M877.9,962.1 H882.9 M880.4,959.6 V964.6" stroke="#00ff00" stroke-width="1.3"/>
<path d="M956.6,964.3 L961.0,959.9 M956.3,962.1 H961.3 M958.8,959.6 V964.6" stroke="#00ff00" stroke-width="1.3"/>
<path d="M1035.0,964.3 L1039.4,959.9 M1034.7,962.1 H1039.7 M1037.2,959.6 V964.6" stroke="#00ff00" stroke-width="1.3"/>
<path d="M1113.5,964.3 L1117.9,959.9 M1113.2,962.1 H1118.2 M1115.7,959.6 V964.6" stroke="#00ff00" stroke-width="1.3"/>
<path d="M1173.0,964.3 L1177.4,959.9 M1172.7,962.1 H1177.7 M1175.2,959.6 V964.6" stroke="#00ff00" stroke-width="1.3"/>
<path d="M1207.5,964.3 L1211.9,959.9 M1207.2,962.1 H1212.2 M1209.7,959.6 V964.6" stroke="#00ff00" stroke-width="1.3"/>
<path d="M1293.9,964.3 L1298.3,959.9 M1293.6,962.1 H1298.6 M1296.1,959.6 V964.6" stroke="#00ff00" stroke-width="1.3"/>
<line x1="551.0" y1="962.1" x2="551.0" y2="939.1" stroke="#00ff00" stroke-width="1.4" />
<line x1="585.6" y1="962.1" x2="585.6" y2="939.1" stroke="#00ff00" stroke-width="1.4" />
<line x1="723.6" y1="962.1" x2="723.6" y2="939.1" stroke="#00ff00" stroke-width="1.4" />
<line x1="880.4" y1="962.1" x2="880.4" y2="939.1" stroke="#00ff00" stroke-width="1.4" />
<line x1="1037.2" y1="962.1" x2="1037.2" y2="939.1" stroke="#00ff00" stroke-width="1.4" />
<line x1="1175.2" y1="962.1" x2="1175.2" y2="939.1" stroke="#00ff00" stroke-width="1.4" />
<line x1="1209.7" y1="962.1" x2="1209.7" y2="939.1" stroke="#00ff00" stroke-width="1.4" />
<text x="527.5" y="960.3" font-size="8.5" fill="#ffffff" font-weight="bold" text-anchor="middle" textLength="14.4" lengthAdjust="spacingAndGlyphs">1500</text>
<text x="568.3" y="960.3" font-size="8.5" fill="#ffffff" font-weight="bold" text-anchor="middle" textLength="14.4" lengthAdjust="spacingAndGlyphs">1100</text>
<text x="615.4" y="960.3" font-size="8.5" fill="#ffffff" font-weight="bold" text-anchor="middle" textLength="14.4" lengthAdjust="spacingAndGlyphs">1900</text>
<text x="684.4" y="960.3" font-size="8.5" fill="#ffffff" font-weight="bold" text-anchor="middle" textLength="14.4" lengthAdjust="spacingAndGlyphs">2500</text>
<text x="762.8" y="960.3" font-size="8.5" fill="#ffffff" font-weight="bold" text-anchor="middle" textLength="14.4" lengthAdjust="spacingAndGlyphs">2500</text>
<text x="841.2" y="960.3" font-size="8.5" fill="#ffffff" font-weight="bold" text-anchor="middle" textLength="14.4" lengthAdjust="spacingAndGlyphs">2500</text>
<text x="919.6" y="960.3" font-size="8.5" fill="#ffffff" font-weight="bold" text-anchor="middle" textLength="14.4" lengthAdjust="spacingAndGlyphs">2500</text>
<text x="998.0" y="960.3" font-size="8.5" fill="#ffffff" font-weight="bold" text-anchor="middle" textLength="14.4" lengthAdjust="spacingAndGlyphs">2500</text>
<text x="1076.4" y="960.3" font-size="8.5" fill="#ffffff" font-weight="bold" text-anchor="middle" textLength="14.4" lengthAdjust="spacingAndGlyphs">2500</text>
<text x="1145.5" y="960.3" font-size="8.5" fill="#ffffff" font-weight="bold" text-anchor="middle" textLength="14.4" lengthAdjust="spacingAndGlyphs">1900</text>
<text x="1192.5" y="960.3" font-size="8.5" fill="#ffffff" font-weight="bold" text-anchor="middle" textLength="14.4" lengthAdjust="spacingAndGlyphs">1100</text>
<text x="1253.0" y="960.3" font-size="8.5" fill="#ffffff" font-weight="bold" text-anchor="middle" textLength="14.4" lengthAdjust="spacingAndGlyphs">2750</text>
<line x1="320.3" y1="459.0" x2="320.3" y2="890.0" stroke="#00ff00" stroke-width="1.4" />
<path d="M318.1,464.8 L322.5,460.4 M317.8,462.6 H322.8 M320.3,460.1 V465.1" stroke="#00ff00" stroke-width="1.3"/>
<path d="M318.1,888.5 L322.5,884.1 M317.8,886.3 H322.8 M320.3,883.8 V888.8" stroke="#00ff00" stroke-width="1.3"/>
<text x="0" y="0" font-size="8.5" fill="#ffffff" font-weight="bold" text-anchor="middle" transform="translate(318.7,674.5) rotate(-90)" textLength="18.0" lengthAdjust="spacingAndGlyphs">13500</text>
<line x1="335.2" y1="459.0" x2="335.2" y2="890.0" stroke="#00ff00" stroke-width="1.4" />
<path d="M333.0,464.8 L337.4,460.4 M332.7,462.6 H337.7 M335.2,460.1 V465.1" stroke="#00ff00" stroke-width="1.3"/>
<path d="M333.0,650.8 L337.4,646.4 M332.7,648.6 H337.7 M335.2,646.1 V651.1" stroke="#00ff00" stroke-width="1.3"/>
<path d="M333.0,702.6 L337.4,698.2 M332.7,700.4 H337.7 M335.2,697.9 V702.9" stroke="#00ff00" stroke-width="1.3"/>
<path d="M333.0,888.5 L337.4,884.1 M332.7,886.3 H337.7 M335.2,883.8 V888.8" stroke="#00ff00" stroke-width="1.3"/>
<text x="0" y="0" font-size="8.5" fill="#ffffff" font-weight="bold" text-anchor="middle" transform="translate(333.6,555.6) rotate(-90)" textLength="14.4" lengthAdjust="spacingAndGlyphs">5925</text>
<text x="0" y="0" font-size="8.5" fill="#ffffff" font-weight="bold" text-anchor="middle" transform="translate(333.6,674.5) rotate(-90)" textLength="14.4" lengthAdjust="spacingAndGlyphs">1650</text>
<text x="0" y="0" font-size="8.5" fill="#ffffff" font-weight="bold" text-anchor="middle" transform="translate(333.6,793.4) rotate(-90)" textLength="14.4" lengthAdjust="spacingAndGlyphs">5925</text>
<line x1="349.5" y1="424.0" x2="349.5" y2="925.0" stroke="#00ff00" stroke-width="1.4" />
<path d="M347.3,429.5 L351.7,425.1 M347.0,427.3 H352.0 M349.5,424.8 V429.8" stroke="#00ff00" stroke-width="1.3"/>
<path d="M347.3,460.9 L351.7,456.5 M347.0,458.7 H352.0 M349.5,456.2 V461.2" stroke="#00ff00" stroke-width="1.3"/>
<path d="M347.3,464.8 L351.7,460.4 M347.0,462.6 H352.0 M349.5,460.1 V465.1" stroke="#00ff00" stroke-width="1.3"/>
<path d="M347.3,590.3 L351.7,585.9 M347.0,588.1 H352.0 M349.5,585.6 V590.6" stroke="#00ff00" stroke-width="1.3"/>
<path d="M347.3,650.8 L351.7,646.4 M347.0,648.6 H352.0 M349.5,646.1 V651.1" stroke="#00ff00" stroke-width="1.3"/>
<path d="M347.3,676.7 L351.7,672.3 M347.0,674.5 H352.0 M349.5,672.0 V677.0" stroke="#00ff00" stroke-width="1.3"/>
<path d="M347.3,702.6 L351.7,698.2 M347.0,700.4 H352.0 M349.5,697.9 V702.9" stroke="#00ff00" stroke-width="1.3"/>
<path d="M347.3,762.9 L351.7,758.5 M347.0,760.7 H352.0 M349.5,758.2 V763.2" stroke="#00ff00" stroke-width="1.3"/>
<path d="M347.3,888.5 L351.7,884.1 M347.0,886.3 H352.0 M349.5,883.8 V888.8" stroke="#00ff00" stroke-width="1.3"/>
<path d="M347.3,892.4 L351.7,888.0 M347.0,890.2 H352.0 M349.5,887.7 V892.7" stroke="#00ff00" stroke-width="1.3"/>
<path d="M347.3,923.8 L351.7,919.4 M347.0,921.6 H352.0 M349.5,919.1 V924.1" stroke="#00ff00" stroke-width="1.3"/>
<line x1="345.5" y1="427.3" x2="381.0" y2="427.3" stroke="#00ff00" stroke-width="1.4" />
<line x1="345.5" y1="458.7" x2="381.0" y2="458.7" stroke="#00ff00" stroke-width="1.4" />
<line x1="345.5" y1="890.2" x2="381.0" y2="890.2" stroke="#00ff00" stroke-width="1.4" />
<line x1="345.5" y1="921.6" x2="381.0" y2="921.6" stroke="#00ff00" stroke-width="1.4" />
<line x1="345.5" y1="588.1" x2="373.6" y2="588.1" stroke="#00ff00" stroke-width="1.4" />
<line x1="345.5" y1="760.7" x2="373.6" y2="760.7" stroke="#00ff00" stroke-width="1.4" />
<text x="0" y="0" font-size="8.5" fill="#ffffff" font-weight="bold" text-anchor="middle" transform="translate(347.9,443.0) rotate(-90)" textLength="14.4" lengthAdjust="spacingAndGlyphs">1000</text>
<text x="0" y="0" font-size="8.5" fill="#ffffff" font-weight="bold" text-anchor="middle" transform="translate(347.9,525.4) rotate(-90)" textLength="14.4" lengthAdjust="spacingAndGlyphs">4000</text>
<text x="0" y="0" font-size="8.5" fill="#ffffff" font-weight="bold" text-anchor="middle" transform="translate(347.9,618.4) rotate(-90)" textLength="14.4" lengthAdjust="spacingAndGlyphs">1925</text>
<text x="0" y="0" font-size="8.5" fill="#ffffff" font-weight="bold" text-anchor="middle" transform="translate(347.9,661.5) rotate(-90)" textLength="10.8" lengthAdjust="spacingAndGlyphs">825</text>
<text x="0" y="0" font-size="8.5" fill="#ffffff" font-weight="bold" text-anchor="middle" transform="translate(347.9,687.5) rotate(-90)" textLength="10.8" lengthAdjust="spacingAndGlyphs">825</text>
<text x="0" y="0" font-size="8.5" fill="#ffffff" font-weight="bold" text-anchor="middle" transform="translate(347.9,730.5) rotate(-90)" textLength="14.4" lengthAdjust="spacingAndGlyphs">1925</text>
<text x="0" y="0" font-size="8.5" fill="#ffffff" font-weight="bold" text-anchor="middle" transform="translate(347.9,823.5) rotate(-90)" textLength="14.4" lengthAdjust="spacingAndGlyphs">4000</text>
<text x="0" y="0" font-size="8.5" fill="#ffffff" font-weight="bold" text-anchor="middle" transform="translate(347.9,906.0) rotate(-90)" textLength="14.4" lengthAdjust="spacingAndGlyphs">1000</text>
<text x="0" y="0" font-size="8.5" fill="#ffffff" font-weight="bold" text-anchor="middle" transform="translate(358.5,460.6) rotate(-90)" textLength="10.8" lengthAdjust="spacingAndGlyphs">125</text>
<text x="0" y="0" font-size="8.5" fill="#ffffff" font-weight="bold" text-anchor="middle" transform="translate(358.5,888.2) rotate(-90)" textLength="10.8" lengthAdjust="spacingAndGlyphs">125</text>
<line x1="1440.5" y1="459.0" x2="1440.5" y2="890.0" stroke="#00ff00" stroke-width="1.4" />
<path d="M1438.3,464.8 L1442.7,460.4 M1438.0,462.6 H1443.0 M1440.5,460.1 V465.1" stroke="#00ff00" stroke-width="1.3"/>
<path d="M1438.3,888.5 L1442.7,884.1 M1438.0,886.3 H1443.0 M1440.5,883.8 V888.8" stroke="#00ff00" stroke-width="1.3"/>
<text x="0" y="0" font-size="8.5" fill="#ffffff" font-weight="bold" text-anchor="middle" transform="translate(1438.9,674.5) rotate(-90)" textLength="18.0" lengthAdjust="spacingAndGlyphs">13500</text>
<line x1="1425.6" y1="459.0" x2="1425.6" y2="890.0" stroke="#00ff00" stroke-width="1.4" />
<path d="M1423.4,464.8 L1427.8,460.4 M1423.1,462.6 H1428.1 M1425.6,460.1 V465.1" stroke="#00ff00" stroke-width="1.3"/>
<path d="M1423.4,650.8 L1427.8,646.4 M1423.1,648.6 H1428.1 M1425.6,646.1 V651.1" stroke="#00ff00" stroke-width="1.3"/>
<path d="M1423.4,702.6 L1427.8,698.2 M1423.1,700.4 H1428.1 M1425.6,697.9 V702.9" stroke="#00ff00" stroke-width="1.3"/>
<path d="M1423.4,888.5 L1427.8,884.1 M1423.1,886.3 H1428.1 M1425.6,883.8 V888.8" stroke="#00ff00" stroke-width="1.3"/>
<text x="0" y="0" font-size="8.5" fill="#ffffff" font-weight="bold" text-anchor="middle" transform="translate(1424.0,555.6) rotate(-90)" textLength="14.4" lengthAdjust="spacingAndGlyphs">5925</text>
<text x="0" y="0" font-size="8.5" fill="#ffffff" font-weight="bold" text-anchor="middle" transform="translate(1424.0,674.5) rotate(-90)" textLength="14.4" lengthAdjust="spacingAndGlyphs">1650</text>
<text x="0" y="0" font-size="8.5" fill="#ffffff" font-weight="bold" text-anchor="middle" transform="translate(1424.0,793.4) rotate(-90)" textLength="14.4" lengthAdjust="spacingAndGlyphs">5925</text>
<line x1="1411.3" y1="424.0" x2="1411.3" y2="925.0" stroke="#00ff00" stroke-width="1.4" />
<path d="M1409.1,429.5 L1413.5,425.1 M1408.8,427.3 H1413.8 M1411.3,424.8 V429.8" stroke="#00ff00" stroke-width="1.3"/>
<path d="M1409.1,460.9 L1413.5,456.5 M1408.8,458.7 H1413.8 M1411.3,456.2 V461.2" stroke="#00ff00" stroke-width="1.3"/>
<path d="M1409.1,464.8 L1413.5,460.4 M1408.8,462.6 H1413.8 M1411.3,460.1 V465.1" stroke="#00ff00" stroke-width="1.3"/>
<path d="M1409.1,590.3 L1413.5,585.9 M1408.8,588.1 H1413.8 M1411.3,585.6 V590.6" stroke="#00ff00" stroke-width="1.3"/>
<path d="M1409.1,650.8 L1413.5,646.4 M1408.8,648.6 H1413.8 M1411.3,646.1 V651.1" stroke="#00ff00" stroke-width="1.3"/>
<path d="M1409.1,676.7 L1413.5,672.3 M1408.8,674.5 H1413.8 M1411.3,672.0 V677.0" stroke="#00ff00" stroke-width="1.3"/>
<path d="M1409.1,702.6 L1413.5,698.2 M1408.8,700.4 H1413.8 M1411.3,697.9 V702.9" stroke="#00ff00" stroke-width="1.3"/>
<path d="M1409.1,762.9 L1413.5,758.5 M1408.8,760.7 H1413.8 M1411.3,758.2 V763.2" stroke="#00ff00" stroke-width="1.3"/>
<path d="M1409.1,888.5 L1413.5,884.1 M1408.8,886.3 H1413.8 M1411.3,883.8 V888.8" stroke="#00ff00" stroke-width="1.3"/>
<path d="M1409.1,892.4 L1413.5,888.0 M1408.8,890.2 H1413.8 M1411.3,887.7 V892.7" stroke="#00ff00" stroke-width="1.3"/>
<path d="M1409.1,923.8 L1413.5,919.4 M1408.8,921.6 H1413.8 M1411.3,919.1 V924.1" stroke="#00ff00" stroke-width="1.3"/>
<line x1="1415.3" y1="427.3" x2="1379.8" y2="427.3" stroke="#00ff00" stroke-width="1.4" />
<line x1="1415.3" y1="458.7" x2="1379.8" y2="458.7" stroke="#00ff00" stroke-width="1.4" />
<line x1="1415.3" y1="890.2" x2="1379.8" y2="890.2" stroke="#00ff00" stroke-width="1.4" />
<line x1="1415.3" y1="921.6" x2="1379.8" y2="921.6" stroke="#00ff00" stroke-width="1.4" />
<line x1="1415.3" y1="588.1" x2="1387.2" y2="588.1" stroke="#00ff00" stroke-width="1.4" />
<line x1="1415.3" y1="760.7" x2="1387.2" y2="760.7" stroke="#00ff00" stroke-width="1.4" />
<text x="0" y="0" font-size="8.5" fill="#ffffff" font-weight="bold" text-anchor="middle" transform="translate(1409.7,443.0) rotate(-90)" textLength="14.4" lengthAdjust="spacingAndGlyphs">1000</text>
<text x="0" y="0" font-size="8.5" fill="#ffffff" font-weight="bold" text-anchor="middle" transform="translate(1409.7,525.4) rotate(-90)" textLength="14.4" lengthAdjust="spacingAndGlyphs">4000</text>
<text x="0" y="0" font-size="8.5" fill="#ffffff" font-weight="bold" text-anchor="middle" transform="translate(1409.7,618.4) rotate(-90)" textLength="14.4" lengthAdjust="spacingAndGlyphs">1925</text>
<text x="0" y="0" font-size="8.5" fill="#ffffff" font-weight="bold" text-anchor="middle" transform="translate(1409.7,661.5) rotate(-90)" textLength="10.8" lengthAdjust="spacingAndGlyphs">825</text>
<text x="0" y="0" font-size="8.5" fill="#ffffff" font-weight="bold" text-anchor="middle" transform="translate(1409.7,687.5) rotate(-90)" textLength="10.8" lengthAdjust="spacingAndGlyphs">825</text>
<text x="0" y="0" font-size="8.5" fill="#ffffff" font-weight="bold" text-anchor="middle" transform="translate(1409.7,730.5) rotate(-90)" textLength="14.4" lengthAdjust="spacingAndGlyphs">1925</text>
<text x="0" y="0" font-size="8.5" fill="#ffffff" font-weight="bold" text-anchor="middle" transform="translate(1409.7,823.5) rotate(-90)" textLength="14.4" lengthAdjust="spacingAndGlyphs">4000</text>
<text x="0" y="0" font-size="8.5" fill="#ffffff" font-weight="bold" text-anchor="middle" transform="translate(1409.7,906.0) rotate(-90)" textLength="14.4" lengthAdjust="spacingAndGlyphs">1000</text>
<text x="0" y="0" font-size="8.5" fill="#ffffff" font-weight="bold" text-anchor="middle" transform="translate(1406.8,460.6) rotate(-90)" textLength="10.8" lengthAdjust="spacingAndGlyphs">125</text>
<text x="0" y="0" font-size="8.5" fill="#ffffff" font-weight="bold" text-anchor="middle" transform="translate(1406.8,888.2) rotate(-90)" textLength="10.8" lengthAdjust="spacingAndGlyphs">125</text>
</g>
<g clip-path="url(#dclip)">
<text x="325.0" y="387.0" font-size="8" fill="#00ff00" font-weight="bold" text-anchor="start" textLength="47.0" lengthAdjust="spacingAndGlyphs" >拉森式III型钢板桩</text>
<line x1="324.0" y1="388.6" x2="369.3" y2="388.6" stroke="#00ff00" stroke-width="1.3" />
<text x="330.3" y="398.0" font-size="8" fill="#00ff00" font-weight="bold" text-anchor="start" textLength="34.5" lengthAdjust="spacingAndGlyphs" >围护结构边线</text>
<line x1="369.3" y1="388.6" x2="388.5" y2="424.3" stroke="#00ff00" stroke-width="1.3" />
<text x="1393.0" y="389.0" font-size="8" fill="#00ff00" font-weight="bold" text-anchor="start" textLength="45.6" lengthAdjust="spacingAndGlyphs" >拉森式III型钢板桩</text>
<line x1="1392.0" y1="390.5" x2="1437.0" y2="390.5" stroke="#00ff00" stroke-width="1.3" />
<text x="1398.0" y="400.0" font-size="8" fill="#00ff00" font-weight="bold" text-anchor="start" textLength="34.0" lengthAdjust="spacingAndGlyphs" >围护结构边线</text>
<line x1="1393.0" y1="390.5" x2="1379.0" y2="419.0" stroke="#00ff00" stroke-width="1.3" />
<text x="331.0" y="960.0" font-size="8" fill="#00ff00" font-weight="bold" text-anchor="start" textLength="46.7" lengthAdjust="spacingAndGlyphs" >拉森式III型钢板桩</text>
<line x1="331.0" y1="961.5" x2="378.0" y2="961.5" stroke="#00ff00" stroke-width="1.3" />
<text x="337.0" y="971.0" font-size="8" fill="#00ff00" font-weight="bold" text-anchor="start" textLength="34.0" lengthAdjust="spacingAndGlyphs" >围护结构边线</text>
<line x1="376.0" y1="961.5" x2="385.4" y2="922.5" stroke="#00ff00" stroke-width="1.3" />
<text x="1387.7" y="959.0" font-size="8" fill="#00ff00" font-weight="bold" text-anchor="start" textLength="46.3" lengthAdjust="spacingAndGlyphs" >拉森式III型钢板桩</text>
<line x1="1386.7" y1="961.0" x2="1434.0" y2="961.0" stroke="#00ff00" stroke-width="1.3" />
<text x="1393.0" y="970.0" font-size="8" fill="#00ff00" font-weight="bold" text-anchor="start" textLength="35.0" lengthAdjust="spacingAndGlyphs" >围护结构边线</text>
<line x1="1386.7" y1="961.0" x2="1375.9" y2="922.4" stroke="#00ff00" stroke-width="1.3" />
<text x="499.0" y="545.6" font-size="10.5" fill="#00ff00"  text-anchor="start" textLength="5.8" lengthAdjust="spacingAndGlyphs" >H</text><text x="506.5" y="545.6" font-size="7.5" fill="#00ff00" font-weight="bold" text-anchor="start" textLength="24.0" lengthAdjust="spacingAndGlyphs" >型钢支撑</text><text x="494.2" y="556.2" font-size="10.8" fill="#00ff00"  text-anchor="start" textLength="51.6" lengthAdjust="spacingAndGlyphs" >HW400X400</text>
<polyline points="470.0,524.5 491.7,546.7 535.7,546.7" fill="none" stroke="#00ff00" stroke-width="1.1" />
<polyline points="475.0,525.0 470.0,524.5 473.0,528.5" fill="none" stroke="#00ff00" stroke-width="1.1" />
<text x="1228.4" y="544.5" font-size="10.5" fill="#00ff00"  text-anchor="start" textLength="5.8" lengthAdjust="spacingAndGlyphs" >H</text><text x="1235.9" y="544.5" font-size="7.5" fill="#00ff00" font-weight="bold" text-anchor="start" textLength="24.0" lengthAdjust="spacingAndGlyphs" >型钢支撑</text><text x="1222.4" y="557.5" font-size="10.8" fill="#00ff00"  text-anchor="start" textLength="51.6" lengthAdjust="spacingAndGlyphs" >HW400X400</text>
<polyline points="1218.0,547.0 1275.0,547.0 1289.4,524.0" fill="none" stroke="#00ff00" stroke-width="1.1" />
<text x="498.6" y="807.0" font-size="10.5" fill="#00ff00"  text-anchor="start" textLength="5.8" lengthAdjust="spacingAndGlyphs" >H</text><text x="506.1" y="807.0" font-size="7.5" fill="#00ff00" font-weight="bold" text-anchor="start" textLength="24.0" lengthAdjust="spacingAndGlyphs" >型钢支撑</text><text x="494.0" y="818.8" font-size="10.8" fill="#00ff00"  text-anchor="start" textLength="51.6" lengthAdjust="spacingAndGlyphs" >HW400X400</text>
<polyline points="545.0,808.4 494.0,808.4 469.1,822.6" fill="none" stroke="#00ff00" stroke-width="1.1" />
<text x="1231.7" y="807.0" font-size="10.5" fill="#00ff00"  text-anchor="start" textLength="5.8" lengthAdjust="spacingAndGlyphs" >H</text><text x="1239.2" y="807.0" font-size="7.5" fill="#00ff00" font-weight="bold" text-anchor="start" textLength="24.0" lengthAdjust="spacingAndGlyphs" >型钢支撑</text><text x="1227.0" y="818.8" font-size="10.8" fill="#00ff00"  text-anchor="start" textLength="51.6" lengthAdjust="spacingAndGlyphs" >HW400X400</text>
<polyline points="1226.0,808.4 1279.0,808.4 1292.0,822.6" fill="none" stroke="#00ff00" stroke-width="1.1" />
<text x="528.0" y="634.3" font-size="10.5" fill="#00ff00"  text-anchor="start" textLength="5.8" lengthAdjust="spacingAndGlyphs" >H</text><text x="535.5" y="634.3" font-size="7.5" fill="#00ff00" font-weight="bold" text-anchor="start" textLength="24.0" lengthAdjust="spacingAndGlyphs" >型钢支撑</text><text x="524.4" y="646.3" font-size="10.8" fill="#00ff00"  text-anchor="start" textLength="51.6" lengthAdjust="spacingAndGlyphs" >HW400X400</text>
<line x1="527.0" y1="636.0" x2="1176.0" y2="636.0" stroke="#00ff00" stroke-width="1.1" />
<polyline points="580.6,633.0 585.6,636.0" fill="none" stroke="#00ff00" stroke-width="1.1" />
<polyline points="718.6,633.0 723.6,636.0" fill="none" stroke="#00ff00" stroke-width="1.1" />
<polyline points="875.4,633.0 880.4,636.0" fill="none" stroke="#00ff00" stroke-width="1.1" />
<polyline points="1032.2,633.0 1037.2,636.0" fill="none" stroke="#00ff00" stroke-width="1.1" />
<polyline points="1170.2,633.0 1175.2,636.0" fill="none" stroke="#00ff00" stroke-width="1.1" />
<text x="968.0" y="453.4" font-size="9.5" fill="#00ff00"  text-anchor="start" textLength="52.0" lengthAdjust="spacingAndGlyphs" >I45c组合钢围檩</text>
<line x1="966.0" y1="455.0" x2="1018.0" y2="455.0" stroke="#00ff00" stroke-width="1.3" />
<line x1="1017.4" y1="435.7" x2="1017.4" y2="455.0" stroke="#00ff00" stroke-width="1.3" />
<text x="969.2" y="898.7" font-size="9.5" fill="#00ff00"  text-anchor="start" textLength="53.0" lengthAdjust="spacingAndGlyphs" >I45c组合钢围檩</text>
<line x1="968.0" y1="900.3" x2="1018.0" y2="900.3" stroke="#00ff00" stroke-width="1.3" />
<line x1="1017.4" y1="900.3" x2="1017.4" y2="915.8" stroke="#00ff00" stroke-width="1.3" />
<polyline points="667.5,415.0 667.5,401.5 676.2,401.5" fill="none" stroke="#ffffff" stroke-width="1.8" /><text x="670.0" y="414.0" font-size="9.5" fill="#ffffff" font-weight="bold" text-anchor="start" textLength="5.5" lengthAdjust="spacingAndGlyphs" >B</text>
<polyline points="1189.5,417.5 1189.5,404.7 1198.0,404.7" fill="none" stroke="#ffffff" stroke-width="1.8" /><text x="1192.0" y="416.5" font-size="9.5" fill="#ffffff" font-weight="bold" text-anchor="start" textLength="5.5" lengthAdjust="spacingAndGlyphs" >C</text>
<polyline points="667.5,936.0 667.5,949.0 676.2,949.0" fill="none" stroke="#ffffff" stroke-width="1.8" /><text x="669.5" y="946.5" font-size="9" fill="#ffffff" font-weight="bold" text-anchor="start" textLength="6.0" lengthAdjust="spacingAndGlyphs" >B</text>
<polyline points="1189.0,933.2 1189.0,947.2 1198.6,947.2" fill="none" stroke="#ffffff" stroke-width="1.8" /><text x="1191.0" y="944.7" font-size="9" fill="#ffffff" font-weight="bold" text-anchor="start" textLength="6.0" lengthAdjust="spacingAndGlyphs" >C</text>
<polyline points="364.8,652.0 364.8,662.0 374.6,662.0" fill="none" stroke="#ffffff" stroke-width="1.8" /><text x="366.8" y="659.5" font-size="9" fill="#ffffff" font-weight="bold" text-anchor="start" textLength="6.0" lengthAdjust="spacingAndGlyphs" >A</text>
<polyline points="1396.0,651.0 1396.0,662.0 1386.0,662.0" fill="none" stroke="#ffffff" stroke-width="2" /><text x="1389.0" y="659.5" font-size="9" fill="#ffffff" font-weight="bold" text-anchor="start" textLength="5.5" lengthAdjust="spacingAndGlyphs" >A</text>
<text x="0" y="0" font-size="6" fill="#ffffff" font-weight="bold" text-anchor="middle" transform="translate(278,311) rotate(-90)" textLength="12" lengthAdjust="spacingAndGlyphs">日期</text>
<text x="0" y="0" font-size="6" fill="#ffffff" font-weight="bold" text-anchor="middle" transform="translate(278,366) rotate(-90)" textLength="18" lengthAdjust="spacingAndGlyphs">会签栏</text>
<text x="0" y="0" font-size="6" fill="#ffffff" font-weight="bold" text-anchor="middle" transform="translate(278,420) rotate(-90)" textLength="18" lengthAdjust="spacingAndGlyphs">会签栏</text>
<text x="900.0" y="1053.4" font-size="15.5" fill="#00ff00" font-weight="bold" text-anchor="start" textLength="109.0" lengthAdjust="spacingAndGlyphs" >围护结构及支撑平面图</text>
<line x1="894.0" y1="1056.5" x2="1011.0" y2="1056.5" stroke="#00ff00" stroke-width="2.2" />
<text x="1015.0" y="1061.0" font-size="10.5" fill="#00ff00" font-weight="bold" text-anchor="start" textLength="17.0" lengthAdjust="spacingAndGlyphs" >1:70</text>
<text x="296.9" y="1054.0" font-size="9" fill="#00ff00" font-weight="bold" text-anchor="start" textLength="28.8" lengthAdjust="spacingAndGlyphs" >施工说明：</text>
<text x="310.0" y="1066.0" font-size="9" fill="#00ff00" font-weight="bold" text-anchor="start" textLength="90.7" lengthAdjust="spacingAndGlyphs" >1.本图尺寸以毫米计?高程以米计。</text>
<text x="310.0" y="1078.5" font-size="9" fill="#00ff00" font-weight="bold" text-anchor="start" textLength="161.0" lengthAdjust="spacingAndGlyphs" >2.组合钢围护结构采用拉森式III型钢板桩?桩长1000mm,</text>
<text x="316.0" y="1087.5" font-size="9" fill="#00ff00" font-weight="bold" text-anchor="start" textLength="170.0" lengthAdjust="spacingAndGlyphs" >施合施工程施工完成后?在钢管桩与钢板桩间回填土?并分层夯实。</text>
<text x="310.0" y="1098.5" font-size="9" fill="#00ff00" font-weight="bold" text-anchor="start" textLength="63.7" lengthAdjust="spacingAndGlyphs" >3.支撑采用H型钢支撑。</text>
<text x="310.0" y="1108.5" font-size="9" fill="#00ff00" font-weight="bold" text-anchor="start" textLength="135.2" lengthAdjust="spacingAndGlyphs" >4.钢板桩长10.2m?应进入基底以下不少于6m。</text>
<text x="310.0" y="1119.5" font-size="9" fill="#00ff00" font-weight="bold" text-anchor="start" textLength="69.6" lengthAdjust="spacingAndGlyphs" >5.围檩采用I45C工字钢。</text>
<text x="310.0" y="1130.5" font-size="9" fill="#00ff00" font-weight="bold" text-anchor="start" textLength="191.4" lengthAdjust="spacingAndGlyphs" >6.图中未详尽处?参见围护结构总说明和相关图纸并严格按有关规范执行。</text>
<line x1="526.0" y1="1081.0" x2="649.0" y2="1081.0" stroke="#808080" stroke-width="1.2" />
<polyline points="526.0,1081.0 528.0,1078.0 531.0,1084.0 533.0,1081.0" fill="none" stroke="#808080" stroke-width="1.1" />
<polyline points="642.0,1081.0 644.0,1078.0 647.0,1084.0 649.0,1081.0" fill="none" stroke="#808080" stroke-width="1.1" />
<line x1="530.3" y1="1061.0" x2="530.3" y2="1100.0" stroke="#808080" stroke-width="1.3" />
<line x1="645.0" y1="1064.0" x2="645.0" y2="1100.0" stroke="#808080" stroke-width="1.3" />
<polyline points="530.0,1070.5 543.6,1070.5 554.2,1089.8 579.5,1089.8 590.5,1070.5 616.3,1070.5 626.8,1089.8 645.0,1089.8" fill="none" stroke="#ff0000" stroke-width="1.5" />
<line x1="546.0" y1="1061.0" x2="586.0" y2="1061.0" stroke="#00ff00" stroke-width="1.3" />
<line x1="547.0" y1="1061.0" x2="547.0" y2="1081.0" stroke="#00ff00" stroke-width="1.3" />
<line x1="585.0" y1="1058.0" x2="585.0" y2="1097.0" stroke="#00ff00" stroke-width="1.3" />
<line x1="584.0" y1="1095.5" x2="625.0" y2="1095.5" stroke="#00ff00" stroke-width="1.3" />
<line x1="623.5" y1="1081.0" x2="623.5" y2="1097.0" stroke="#00ff00" stroke-width="1.3" />
<line x1="572.0" y1="1070.5" x2="586.0" y2="1070.5" stroke="#00ff00" stroke-width="1.3" />
<text x="565.0" y="1056.0" font-size="7" fill="#ffffff"  text-anchor="start" textLength="4.0" lengthAdjust="spacingAndGlyphs" >b</text>
<text x="602.0" y="1094.0" font-size="7" fill="#ffffff"  text-anchor="start" textLength="4.0" lengthAdjust="spacingAndGlyphs" >b</text>
<text x="567.0" y="1083.0" font-size="7" fill="#ffffff"  text-anchor="start" textLength="4.0" lengthAdjust="spacingAndGlyphs" >h</text>
<text x="605.7" y="1059.5" font-size="8" fill="#00ff00" font-weight="bold" text-anchor="start" textLength="45.7" lengthAdjust="spacingAndGlyphs" >拉森式III型钢板桩</text>
<line x1="602.0" y1="1060.5" x2="658.0" y2="1060.5" stroke="#00ff00" stroke-width="1.3" />
<line x1="602.0" y1="1060.5" x2="598.0" y2="1070.5" stroke="#00ff00" stroke-width="1.3" />
<text x="540.0" y="1114.0" font-size="8.5" fill="#00ff00" font-weight="bold" text-anchor="start" textLength="87.0" lengthAdjust="spacingAndGlyphs" >拉森式III型钢板桩连接示意图</text>
<line x1="537.8" y1="1117.0" x2="630.8" y2="1117.0" stroke="#ffff00" stroke-width="2" />
<polyline points="1244.9,1161.0 1244.9,1024.9 1509.0,1024.9" fill="none" stroke="#ff0000" stroke-width="2" />
<line x1="1245.0" y1="1053.6" x2="1509.0" y2="1053.6" stroke="#ffffff" stroke-width="1.5" />
<line x1="1245.0" y1="1069.0" x2="1355.0" y2="1069.0" stroke="#ffffff" stroke-width="1.5" />
<line x1="1454.3" y1="1069.0" x2="1509.0" y2="1069.0" stroke="#ffffff" stroke-width="1.5" />
<line x1="1245.0" y1="1084.5" x2="1509.0" y2="1084.5" stroke="#ffffff" stroke-width="1.5" />
<line x1="1245.0" y1="1099.5" x2="1355.0" y2="1099.5" stroke="#ffffff" stroke-width="1.5" />
<line x1="1245.0" y1="1115.0" x2="1278.0" y2="1115.0" stroke="#ffffff" stroke-width="1.5" />
<line x1="1245.0" y1="1130.2" x2="1509.0" y2="1130.2" stroke="#ffffff" stroke-width="1.5" />
<line x1="1245.0" y1="1145.7" x2="1509.0" y2="1145.7" stroke="#ffffff" stroke-width="1.5" />
<line x1="1278.0" y1="1053.6" x2="1278.0" y2="1161.0" stroke="#ffffff" stroke-width="1.5" />
<line x1="1333.2" y1="1053.6" x2="1333.2" y2="1130.2" stroke="#ffffff" stroke-width="1.5" />
<line x1="1355.3" y1="1053.6" x2="1355.3" y2="1161.0" stroke="#ffffff" stroke-width="1.5" />
<line x1="1454.3" y1="1053.6" x2="1454.3" y2="1084.5" stroke="#ffffff" stroke-width="1.5" />
<line x1="1387.6" y1="1130.2" x2="1387.6" y2="1161.0" stroke="#ffffff" stroke-width="1.5" />
<line x1="1432.0" y1="1130.2" x2="1432.0" y2="1145.7" stroke="#ffffff" stroke-width="1.5" />
<line x1="1465.2" y1="1130.2" x2="1465.2" y2="1145.7" stroke="#ffffff" stroke-width="1.5" />
<text x="1254.0" y="1064.8" font-size="8" fill="#ffffff" font-weight="bold" text-anchor="start" textLength="15.0" lengthAdjust="spacingAndGlyphs" >核定</text>
<text x="1254.0" y="1080.3" font-size="8" fill="#ffffff" font-weight="bold" text-anchor="start" textLength="15.0" lengthAdjust="spacingAndGlyphs" >审查</text>
<text x="1254.0" y="1095.5" font-size="8" fill="#ffffff" font-weight="bold" text-anchor="start" textLength="15.0" lengthAdjust="spacingAndGlyphs" >校核</text>
<text x="1254.0" y="1110.8" font-size="8" fill="#ffffff" font-weight="bold" text-anchor="start" textLength="15.0" lengthAdjust="spacingAndGlyphs" >设计</text>
<text x="1254.0" y="1126.1" font-size="8" fill="#ffffff" font-weight="bold" text-anchor="start" textLength="15.0" lengthAdjust="spacingAndGlyphs" >制图</text>
<text x="1254.0" y="1141.5" font-size="8" fill="#ffffff" font-weight="bold" text-anchor="start" textLength="15.0" lengthAdjust="spacingAndGlyphs" >描图</text>
<text x="1247.5" y="1156.9" font-size="8" fill="#ffffff" font-weight="bold" text-anchor="start" textLength="30.0" lengthAdjust="spacingAndGlyphs" >设计证号</text>
<text x="1359.9" y="1071.7" font-size="8" fill="#ff0000" font-weight="bold" text-anchor="start" textLength="41.7" lengthAdjust="spacingAndGlyphs" >某水源保护工程(二期)</text>
<text x="1458.0" y="1064.5" font-size="8" fill="#ffffff" font-weight="bold" text-anchor="start" textLength="44.0" lengthAdjust="spacingAndGlyphs" >施工图　设计</text>
<text x="1458.0" y="1080.0" font-size="8" fill="#ffffff" font-weight="bold" text-anchor="start" textLength="44.0" lengthAdjust="spacingAndGlyphs" >结　构　部分</text>
<text x="1374.4" y="1111.7" font-size="13" fill="#ffffff" font-weight="bold" text-anchor="start" textLength="100.8" lengthAdjust="spacingAndGlyphs" >围护结构及支撑平面图</text>
<text x="1365.0" y="1141.5" font-size="8" fill="#ffffff" font-weight="bold" text-anchor="start" textLength="14.0" lengthAdjust="spacingAndGlyphs" >比例</text>
<text x="1401.0" y="1141.0" font-size="8" fill="#b4b4b4"  text-anchor="start" textLength="19.0" lengthAdjust="spacingAndGlyphs" >1:70</text>
<text x="1442.0" y="1141.5" font-size="8" fill="#ffffff" font-weight="bold" text-anchor="start" textLength="14.0" lengthAdjust="spacingAndGlyphs" >日期</text>
<text x="1365.0" y="1157.0" font-size="8" fill="#ffffff" font-weight="bold" text-anchor="start" textLength="14.0" lengthAdjust="spacingAndGlyphs" >图号</text>
<text x="1399.5" y="1156.5" font-size="7.5" fill="#d0d0d0"  text-anchor="start" textLength="40.0" lengthAdjust="spacingAndGlyphs" >YSB-4HJ-06</text>
<circle cx="1299.3" cy="1138.4" r="3" stroke="#ffffff" stroke-width="1.1" fill="none"/>
<line x1="1294.0" y1="1138.4" x2="1305.0" y2="1138.4" stroke="#ffffff" stroke-width="1" />
<polyline points="1305.0,1135.0 1318.0,1137.0 1318.0,1140.0 1305.0,1142.0 1305.0,1135.0" fill="none" stroke="#ffffff" stroke-width="1.1" />
<text x="1318.5" y="1141.8" font-size="9" fill="#ffffff" font-weight="bold" text-anchor="start" textLength="17.0" lengthAdjust="spacingAndGlyphs" font-style="italic">CAD</text>
<circle cx="1455.9" cy="324" r="27" stroke="#ff0000" stroke-width="1.5" fill="none"/>
<polygon points="1431.5,314.5 1434.8,308.6 1479,337.3" fill="#ff0000"/>
<text x="1482.0" y="348.0" font-size="10" fill="#ff0000"  text-anchor="start" textLength="7.0" lengthAdjust="spacingAndGlyphs" font-style="italic">N</text>
</g>
<g clip-path="url(#dclip)"><circle cx="1587.8" cy="246.8" r="52.6" stroke="#2c2c2c" stroke-width="12.6" fill="none"/><rect x="1562.2" y="221.2" width="51.6" height="51.6" fill="#a6a6a6"/><rect x="1572" y="231" width="31.7" height="31.6" fill="#8f9297"/><path d="M1585.5,235 V256.5 M1573,257 H1603 M1586,246 H1597" stroke="#5d6166" stroke-width="2.2" fill="none"/><text x="1588" y="199" font-size="19" fill="#a9a9a9" text-anchor="middle">北</text><text x="1588" y="312" font-size="19" fill="#a9a9a9" text-anchor="middle">南</text><text x="1531" y="255.5" font-size="19" fill="#a9a9a9" text-anchor="middle">西</text><text x="1644" y="255.5" font-size="19" fill="#a9a9a9" text-anchor="middle">东</text><rect x="1565.4" y="334.8" width="45.8" height="16.4" rx="5" fill="#8d8d95"/><text x="1569" y="347.5" font-size="11.5" fill="#56565c">WCS</text><path d="M1598,341 L1606,341 L1602,346 Z" fill="#b0b0b8"/><line x1="1564.5" y1="165.0" x2="1564.5" y2="1291.0" stroke="#ffffff" stroke-width="1.3" /><line x1="33.0" y1="1239.3" x2="1671.0" y2="1239.3" stroke="#ffffff" stroke-width="1.3" /><rect x="1558.8" y="1233.4" width="12.2" height="12.2" stroke="#ffffff" stroke-width="1.3" fill="#000" /><rect x="1585.4" y="1274.3" width="32" height="16.7" fill="#ff0000"/><line x1="59.3" y1="1214.3" x2="59.3" y2="1264.4" stroke="#ffffff" stroke-width="1.2" /><line x1="59.3" y1="1264.4" x2="109.4" y2="1264.4" stroke="#ffffff" stroke-width="1.2" /><rect x="55.4" y="1259.2" width="9.4" height="9.4" stroke="#ffffff" stroke-width="1.2" fill="none" /><polyline points="61.5,1197.0 67.5,1204.5 73.5,1197.0" fill="none" stroke="#ffffff" stroke-width="1.2" /><line x1="67.5" y1="1204.5" x2="67.5" y2="1210.0" stroke="#ffffff" stroke-width="1.2" /><line x1="114.0" y1="1250.0" x2="127.0" y2="1263.0" stroke="#ffffff" stroke-width="1.2" /><line x1="127.0" y1="1250.0" x2="114.0" y2="1263.0" stroke="#ffffff" stroke-width="1.2" /></g>
</svg>
<svg width="1707" height="165" style="position:absolute;left:0;top:0"><polygon points="103.3,56 324.8,56 315,79 93.5,79" fill="#3b4453"/><path d="M49,73 L54,59 M362.5,73 L367.5,59" stroke="#4a5260" stroke-width="1.2"/></svg>
<div style="position:absolute;left:531px;top:8px;font-size:13px;color:#e8e8e8;white-space:nowrap;line-height:15px;">Autodesk AutoCAD 2025</div>
<div style="position:absolute;left:690px;top:8px;font-size:12px;color:#e8e8e8;white-space:nowrap;line-height:14px;width:210px"><span style="display:inline-block;width:1em;text-align:center">某</span><span style="display:inline-block;width:1em;text-align:center">水</span><span style="display:inline-block;width:1em;text-align:center">源</span><span style="display:inline-block;width:1em;text-align:center">保</span><span style="display:inline-block;width:1em;text-align:center">护</span><span style="display:inline-block;width:1em;text-align:center">工</span><span style="display:inline-block;width:1em;text-align:center">程</span><span style="display:inline-block;width:1em;text-align:center">调</span><span style="display:inline-block;width:1em;text-align:center">节</span><span style="display:inline-block;width:1em;text-align:center">池</span><span style="display:inline-block;width:1em;text-align:center">结</span><span style="display:inline-block;width:1em;text-align:center">构</span><span style="display:inline-block;width:1em;text-align:center">设</span><span style="display:inline-block;width:1em;text-align:center">计</span><span style="display:inline-block;width:1em;text-align:center">图</span><span style="font-size:13px">.dwg</span></div>
<div style="position:absolute;left:18px;top:35px;font-size:12.2px;color:#d2d2d2;white-space:nowrap;line-height:14.2px;width:38px"><span style="display:inline-block;width:1em;text-align:center">文</span><span style="display:inline-block;width:1em;text-align:center">件</span>(F)</div>
<div style="position:absolute;left:79.7px;top:35px;font-size:12.2px;color:#d2d2d2;white-space:nowrap;line-height:14.2px;width:38.3px"><span style="display:inline-block;width:1em;text-align:center">编</span><span style="display:inline-block;width:1em;text-align:center">辑</span>(E)</div>
<div style="position:absolute;left:142.7px;top:35px;font-size:12.2px;color:#d2d2d2;white-space:nowrap;line-height:14.2px;width:39.3px"><span style="display:inline-block;width:1em;text-align:center">视</span><span style="display:inline-block;width:1em;text-align:center">图</span>(V)</div>
<div style="position:absolute;left:206.7px;top:35px;font-size:12.2px;color:#d2d2d2;white-space:nowrap;line-height:14.2px;width:36.1px"><span style="display:inline-block;width:1em;text-align:center">插</span><span style="display:inline-block;width:1em;text-align:center">入</span>(I)</div>
<div style="position:absolute;left:267.4px;top:35px;font-size:12.2px;color:#d2d2d2;white-space:nowrap;line-height:14.2px;width:41px"><span style="display:inline-block;width:1em;text-align:center">格</span><span style="display:inline-block;width:1em;text-align:center">式</span>(O)</div>
<div style="position:absolute;left:333px;top:35px;font-size:12.2px;color:#d2d2d2;white-space:nowrap;line-height:14.2px;width:38.4px"><span style="display:inline-block;width:1em;text-align:center">工</span><span style="display:inline-block;width:1em;text-align:center">具</span>(T)</div>
<div style="position:absolute;left:395.3px;top:35px;font-size:12.2px;color:#d2d2d2;white-space:nowrap;line-height:14.2px;width:41.1px"><span style="display:inline-block;width:1em;text-align:center">绘</span><span style="display:inline-block;width:1em;text-align:center">图</span>(D)</div>
<div style="position:absolute;left:461px;top:35px;font-size:12.2px;color:#d2d2d2;white-space:nowrap;line-height:14.2px;width:41px"><span style="display:inline-block;width:1em;text-align:center">标</span><span style="display:inline-block;width:1em;text-align:center">注</span>(N)</div>
<div style="position:absolute;left:526.6px;top:35px;font-size:12.2px;color:#d2d2d2;white-space:nowrap;line-height:14.2px;width:44px"><span style="display:inline-block;width:1em;text-align:center">修</span><span style="display:inline-block;width:1em;text-align:center">改</span>(M)</div>
<div style="position:absolute;left:595px;top:35px;font-size:12.2px;color:#d2d2d2;white-space:nowrap;line-height:14.2px;width:38.5px"><span style="display:inline-block;width:1em;text-align:center">参</span><span style="display:inline-block;width:1em;text-align:center">数</span>(P)</div>
<div style="position:absolute;left:658px;top:35px;font-size:12.2px;color:#d2d2d2;white-space:nowrap;line-height:14.2px;width:43.4px"><span style="display:inline-block;width:1em;text-align:center">窗</span><span style="display:inline-block;width:1em;text-align:center">口</span>(W)</div>
<div style="position:absolute;left:726.4px;top:35px;font-size:12.2px;color:#d2d2d2;white-space:nowrap;line-height:14.2px;width:40px"><span style="display:inline-block;width:1em;text-align:center">帮</span><span style="display:inline-block;width:1em;text-align:center">助</span>(H)</div>
<div style="position:absolute;left:791px;top:35px;font-size:12.2px;color:#d2d2d2;white-space:nowrap;line-height:14.2px;width:44.3px">Express</div>
<div style="position:absolute;left:62px;top:60px;font-size:12.3px;color:#e6e6e6;white-space:nowrap;line-height:14.3px;"><span style="display:inline-block;width:1em;text-align:center">开</span><span style="display:inline-block;width:1em;text-align:center">始</span></div>
<div style="position:absolute;left:110px;top:60px;font-size:12px;color:#f0f0f0;white-space:nowrap;line-height:14px;"><span style="display:inline-block;width:1em;text-align:center">某</span><span style="display:inline-block;width:1em;text-align:center">水</span><span style="display:inline-block;width:1em;text-align:center">源</span><span style="display:inline-block;width:1em;text-align:center">保</span><span style="display:inline-block;width:1em;text-align:center">护</span><span style="display:inline-block;width:1em;text-align:center">工</span><span style="display:inline-block;width:1em;text-align:center">程</span><span style="display:inline-block;width:1em;text-align:center">调</span><span style="display:inline-block;width:1em;text-align:center">节</span><span style="display:inline-block;width:1em;text-align:center">池</span><span style="display:inline-block;width:1em;text-align:center">结</span><span style="display:inline-block;width:1em;text-align:center">构</span><span style="display:inline-block;width:1em;text-align:center">设</span><span style="display:inline-block;width:1em;text-align:center">计</span><span style="display:inline-block;width:1em;text-align:center">图</span>*</div>
<svg width="1707" height="80" style="position:absolute;left:0;top:0"><path d="M20,61.5 H36 M20,67 H36 M20,72.5 H36" stroke="#e8e8e8" stroke-width="2"/><path d="M304.5,63 L312.5,71 M312.5,63 L304.5,71" stroke="#b8bcc4" stroke-width="1.8"/><path d="M341.2,59 V75 M333,67 H349.4" stroke="#e8e8e8" stroke-width="2"/></svg>
<svg width="1707" height="32" style="position:absolute;left:0;top:0"><path d="M15,7 L19,5 V23 L15,25 Z" fill="#ee5a86"/><rect x="19" y="5" width="18" height="18" fill="#e8104e"/><path d="M17,23 H37 V9 H39 V27 H17 Z" fill="#7e0a2a"/><text x="28" y="20" font-size="14" font-weight="bold" fill="#fff" text-anchor="middle">A</text><path d="M42,13 H49 L45.5,17 Z" fill="#dcdcdc"/></svg>
<svg width="1707" height="32" style="position:absolute;left:0;top:0"><g transform="translate(59.4,7.0)"><path d="M2,3 H12 L16,7 V16 H2 Z" fill="#d6d6d6"/><path d="M12,3 V7 H16" fill="#3b4453" stroke="#3b4453" stroke-width="0.8"/></g><g transform="translate(83.6,7.0)"><path d="M2,4 H7 L9,6 H14 V8 H5 L2,15 Z" fill="#d6d6d6"/><path d="M5,9 H17 L14,16 H2 Z" fill="#d6d6d6"/></g><g transform="translate(107.7,7.0)"><path d="M2,2 H16 V16 H2 Z" fill="#bdbdbd"/><rect x="5" y="2" width="8" height="6" fill="#d6d6d6"/><rect x="5" y="11" width="8" height="5" fill="#f0f0f0"/></g><g transform="translate(131.6,7.0)"><path d="M2,2 H14 V14 H2 Z" fill="#bdbdbd"/><rect x="5" y="2" width="6" height="5" fill="#d6d6d6"/><path d="M9,16 L16,9 L18,11 L11,18 Z" fill="#f2b53a"/></g><g transform="translate(156.2,7.0)"><rect x="3" y="2" width="9" height="14" rx="1" fill="none" stroke="#d6d6d6" stroke-width="1.6"/><path d="M9,11 H17 L15,17 H8 Z" fill="#f2b53a"/></g><g transform="translate(179.6,7.0)"><rect x="5" y="2" width="9" height="14" rx="1" fill="none" stroke="#d6d6d6" stroke-width="1.6"/><path d="M1,8 H8 M6,5 L9,8 L6,11" stroke="#5cb6f2" stroke-width="1.8" fill="none"/></g><g transform="translate(203.8,7.0)"><rect x="5" y="2" width="8" height="4" fill="#d6d6d6"/><rect x="1" y="6" width="16" height="7" fill="#d6d6d6"/><rect x="4" y="11" width="10" height="5" fill="#5cb6f2"/></g><g transform="translate(227.7,7.0)"><path d="M2,8 L8,3 V6 Q16,6 16,13 Q13,9 8,10 V13 Z" fill="#d6d6d6"/></g><g transform="translate(245.2,7.0)"><path d="M6,8 H12 L9,11 Z" fill="#d6d6d6"/></g><g transform="translate(264.0,7.0)"><path d="M16,8 L10,3 V6 Q2,6 2,13 Q5,9 10,10 V13 Z" fill="#6a717d"/></g><g transform="translate(281.6,7.0)"><path d="M6,8 H12 L9,11 Z" fill="#d6d6d6"/></g><g transform="translate(295.6,7.0)"><path d="M4,5 H14 M4,8 H14 L9,13 Z" stroke="#d6d6d6" stroke-width="1.6" fill="#d6d6d6"/></g><g transform="translate(315.5,7.0)"><path d="M1,9 L17,2 L13,16 L8,11 Z" fill="#5cb6f2"/><path d="M8,11 L17,2" stroke="#3b4453" stroke-width="1"/></g><path d="M1065,12 L1070,16 L1065,20 Z" fill="#d0d0d0"/><rect x="1076.2" y="5.8" width="177.8" height="20" fill="#424b5a"/><circle cx="1265" cy="14.5" r="5" fill="none" stroke="#d8d8d8" stroke-width="1.6"/><path d="M1268.5,18 L1272,21.5" stroke="#e8a030" stroke-width="2"/><circle cx="1291" cy="11" r="4.2" fill="#d8d8d8"/><path d="M1283.5,22.5 Q1284,15.5 1291,15.5 Q1298,15.5 1298.5,22.5 Z" fill="#d8d8d8"/><path d="M1388,14.5 H1394 L1391,18 Z" fill="#d0d0d0"/><path d="M1406,10 H1409 L1411,18 H1418 L1420,12 H1410" stroke="#d0d0d0" stroke-width="1.5" fill="none"/><circle cx="1412" cy="21" r="1.3" fill="#d0d0d0"/><circle cx="1417" cy="21" r="1.3" fill="#d0d0d0"/><path d="M1437,8 L1431,21 M1437,8 L1443,21 M1433,17 H1441" stroke="#d8d8d8" stroke-width="2.2" fill="none"/><path d="M1449,14.5 H1455 L1452,18 Z" fill="#d0d0d0"/><rect x="1465" y="7" width="1" height="19" fill="#4a5260"/><circle cx="1483" cy="16" r="7.5" fill="#d0d0d0"/><text x="1483" y="20.5" font-size="11" font-weight="bold" fill="#222933" text-anchor="middle">?</text><path d="M1497,14.5 H1503 L1500,18 Z" fill="#d0d0d0"/><path d="M1585.5,16 H1597" stroke="#e0e0e0" stroke-width="1.2"/><rect x="1632" y="11" width="10" height="10" fill="none" stroke="#e0e0e0" stroke-width="1.2"/><path d="M1678,11 L1688,21 M1688,11 L1678,21" stroke="#e0e0e0" stroke-width="1.3"/></svg>
<div style="position:absolute;left:1078px;top:8px;font-size:12px;color:#a8adb5;white-space:nowrap;line-height:14px;font-style:italic"><span style="display:inline-block;width:1em;text-align:center">键</span><span style="display:inline-block;width:1em;text-align:center">入</span><span style="display:inline-block;width:1em;text-align:center">关</span><span style="display:inline-block;width:1em;text-align:center">键</span><span style="display:inline-block;width:1em;text-align:center">字</span><span style="display:inline-block;width:1em;text-align:center">或</span><span style="display:inline-block;width:1em;text-align:center">短</span><span style="display:inline-block;width:1em;text-align:center">语</span></div>
<div style="position:absolute;left:1303px;top:8px;font-size:13px;color:#e6e6e6;white-space:nowrap;line-height:15px;"><span style="display:inline-block;width:1em;text-align:center">登</span><span style="display:inline-block;width:1em;text-align:center">录</span></div>
<div style="position:absolute;left:337.4px;top:9px;font-size:13px;color:#66c0f4;white-space:nowrap;line-height:15px;"><span style="display:inline-block;width:1em;text-align:center">共</span><span style="display:inline-block;width:1em;text-align:center">享</span></div>
<svg width="1707" height="60" style="position:absolute;left:0;top:0"><path d="M1617.5,42 H1628.5" stroke="#e0e0e0" stroke-width="1.2"/><rect x="1652" y="39" width="8" height="8" fill="none" stroke="#e0e0e0" stroke-width="1.2"/><path d="M1654,39 V37 H1662 V45 H1660" stroke="#e0e0e0" stroke-width="1.2" fill="none"/><path d="M1681,37 L1691,47 M1691,37 L1681,47" stroke="#e0e0e0" stroke-width="1.3"/></svg>
<svg width="1707" height="170" style="position:absolute;left:0;top:0">
<rect x="4.5" y="84.5" width="645" height="21" fill="#3a4352" stroke="#2b313b" stroke-width="1"/>
<rect x="651.5" y="84.5" width="400" height="21" fill="#3a4352" stroke="#2b313b" stroke-width="1"/>
<rect x="1053.5" y="84.5" width="653" height="21" fill="#3a4352" stroke="#2b313b" stroke-width="1"/>
<rect x="4.5" y="111.0" width="641" height="21.5" fill="#3a4352" stroke="#2b313b" stroke-width="1"/>
<rect x="647.5" y="111.0" width="486" height="21.5" fill="#3a4352" stroke="#2b313b" stroke-width="1"/>
<rect x="4.5" y="137.5" width="77" height="22.5" fill="#3a4352" stroke="#2b313b" stroke-width="1"/>
<g transform="translate(0.0,86.0)"><rect x="6.9" y="1.5" width="1.3" height="1.3" fill="#a8aeb6"/><rect x="6.9" y="4.2" width="1.3" height="1.3" fill="#a8aeb6"/><rect x="6.9" y="6.9" width="1.3" height="1.3" fill="#a8aeb6"/><rect x="6.9" y="9.6" width="1.3" height="1.3" fill="#a8aeb6"/><rect x="6.9" y="12.3" width="1.3" height="1.3" fill="#a8aeb6"/><rect x="6.9" y="15.0" width="1.3" height="1.3" fill="#a8aeb6"/><rect x="9.1" y="1.5" width="1.3" height="1.3" fill="#a8aeb6"/><rect x="9.1" y="4.2" width="1.3" height="1.3" fill="#a8aeb6"/><rect x="9.1" y="6.9" width="1.3" height="1.3" fill="#a8aeb6"/><rect x="9.1" y="9.6" width="1.3" height="1.3" fill="#a8aeb6"/><rect x="9.1" y="12.3" width="1.3" height="1.3" fill="#a8aeb6"/><rect x="9.1" y="15.0" width="1.3" height="1.3" fill="#a8aeb6"/></g>
<g transform="translate(647.7,86.0)"><rect x="6.9" y="1.5" width="1.3" height="1.3" fill="#a8aeb6"/><rect x="6.9" y="4.2" width="1.3" height="1.3" fill="#a8aeb6"/><rect x="6.9" y="6.9" width="1.3" height="1.3" fill="#a8aeb6"/><rect x="6.9" y="9.6" width="1.3" height="1.3" fill="#a8aeb6"/><rect x="6.9" y="12.3" width="1.3" height="1.3" fill="#a8aeb6"/><rect x="6.9" y="15.0" width="1.3" height="1.3" fill="#a8aeb6"/><rect x="9.1" y="1.5" width="1.3" height="1.3" fill="#a8aeb6"/><rect x="9.1" y="4.2" width="1.3" height="1.3" fill="#a8aeb6"/><rect x="9.1" y="6.9" width="1.3" height="1.3" fill="#a8aeb6"/><rect x="9.1" y="9.6" width="1.3" height="1.3" fill="#a8aeb6"/><rect x="9.1" y="12.3" width="1.3" height="1.3" fill="#a8aeb6"/><rect x="9.1" y="15.0" width="1.3" height="1.3" fill="#a8aeb6"/></g>
<g transform="translate(1048.0,86.0)"><rect x="6.9" y="1.5" width="1.3" height="1.3" fill="#a8aeb6"/><rect x="6.9" y="4.2" width="1.3" height="1.3" fill="#a8aeb6"/><rect x="6.9" y="6.9" width="1.3" height="1.3" fill="#a8aeb6"/><rect x="6.9" y="9.6" width="1.3" height="1.3" fill="#a8aeb6"/><rect x="6.9" y="12.3" width="1.3" height="1.3" fill="#a8aeb6"/><rect x="6.9" y="15.0" width="1.3" height="1.3" fill="#a8aeb6"/><rect x="9.1" y="1.5" width="1.3" height="1.3" fill="#a8aeb6"/><rect x="9.1" y="4.2" width="1.3" height="1.3" fill="#a8aeb6"/><rect x="9.1" y="6.9" width="1.3" height="1.3" fill="#a8aeb6"/><rect x="9.1" y="9.6" width="1.3" height="1.3" fill="#a8aeb6"/><rect x="9.1" y="12.3" width="1.3" height="1.3" fill="#a8aeb6"/><rect x="9.1" y="15.0" width="1.3" height="1.3" fill="#a8aeb6"/></g>
<g transform="translate(0.0,113.0)"><rect x="6.9" y="1.5" width="1.3" height="1.3" fill="#a8aeb6"/><rect x="6.9" y="4.2" width="1.3" height="1.3" fill="#a8aeb6"/><rect x="6.9" y="6.9" width="1.3" height="1.3" fill="#a8aeb6"/><rect x="6.9" y="9.6" width="1.3" height="1.3" fill="#a8aeb6"/><rect x="6.9" y="12.3" width="1.3" height="1.3" fill="#a8aeb6"/><rect x="6.9" y="15.0" width="1.3" height="1.3" fill="#a8aeb6"/><rect x="9.1" y="1.5" width="1.3" height="1.3" fill="#a8aeb6"/><rect x="9.1" y="4.2" width="1.3" height="1.3" fill="#a8aeb6"/><rect x="9.1" y="6.9" width="1.3" height="1.3" fill="#a8aeb6"/><rect x="9.1" y="9.6" width="1.3" height="1.3" fill="#a8aeb6"/><rect x="9.1" y="12.3" width="1.3" height="1.3" fill="#a8aeb6"/><rect x="9.1" y="15.0" width="1.3" height="1.3" fill="#a8aeb6"/></g>
<g transform="translate(643.0,113.0)"><rect x="6.9" y="1.5" width="1.3" height="1.3" fill="#a8aeb6"/><rect x="6.9" y="4.2" width="1.3" height="1.3" fill="#a8aeb6"/><rect x="6.9" y="6.9" width="1.3" height="1.3" fill="#a8aeb6"/><rect x="6.9" y="9.6" width="1.3" height="1.3" fill="#a8aeb6"/><rect x="6.9" y="12.3" width="1.3" height="1.3" fill="#a8aeb6"/><rect x="6.9" y="15.0" width="1.3" height="1.3" fill="#a8aeb6"/><rect x="9.1" y="1.5" width="1.3" height="1.3" fill="#a8aeb6"/><rect x="9.1" y="4.2" width="1.3" height="1.3" fill="#a8aeb6"/><rect x="9.1" y="6.9" width="1.3" height="1.3" fill="#a8aeb6"/><rect x="9.1" y="9.6" width="1.3" height="1.3" fill="#a8aeb6"/><rect x="9.1" y="12.3" width="1.3" height="1.3" fill="#a8aeb6"/><rect x="9.1" y="15.0" width="1.3" height="1.3" fill="#a8aeb6"/></g>
<g transform="translate(0.0,140.0)"><rect x="6.9" y="1.5" width="1.3" height="1.3" fill="#a8aeb6"/><rect x="6.9" y="4.2" width="1.3" height="1.3" fill="#a8aeb6"/><rect x="6.9" y="6.9" width="1.3" height="1.3" fill="#a8aeb6"/><rect x="6.9" y="9.6" width="1.3" height="1.3" fill="#a8aeb6"/><rect x="6.9" y="12.3" width="1.3" height="1.3" fill="#a8aeb6"/><rect x="6.9" y="15.0" width="1.3" height="1.3" fill="#a8aeb6"/><rect x="9.1" y="1.5" width="1.3" height="1.3" fill="#a8aeb6"/><rect x="9.1" y="4.2" width="1.3" height="1.3" fill="#a8aeb6"/><rect x="9.1" y="6.9" width="1.3" height="1.3" fill="#a8aeb6"/><rect x="9.1" y="9.6" width="1.3" height="1.3" fill="#a8aeb6"/><rect x="9.1" y="12.3" width="1.3" height="1.3" fill="#a8aeb6"/><rect x="9.1" y="15.0" width="1.3" height="1.3" fill="#a8aeb6"/></g>
<rect x="1214" y="86" width="2.2" height="18" fill="#25292f"/>
<rect x="1379.5" y="86" width="2.2" height="18" fill="#25292f"/>
<rect x="1510.5" y="86" width="2.2" height="18" fill="#25292f"/>
<g transform="translate(14.9,86.0)"><path d="M2,3 H12 L16,7 V16 H2 Z" fill="#d6d6d6"/><path d="M12,3 V7 H16" fill="#3b4453" stroke="#3b4453" stroke-width="0.8"/></g>
<g transform="translate(37.8,86.0)"><path d="M2,4 H7 L9,6 H14 V8 H5 L2,15 Z" fill="#d6d6d6"/><path d="M5,9 H17 L14,16 H2 Z" fill="#d6d6d6"/></g>
<g transform="translate(60.7,86.0)"><path d="M2,2 H16 V16 H2 Z" fill="#bdbdbd"/><rect x="5" y="2" width="8" height="6" fill="#d6d6d6"/><rect x="5" y="11" width="8" height="5" fill="#f0f0f0"/></g>
<g transform="translate(76.3,86.0)"><rect x="8.5" y="0" width="1.2" height="20" fill="#232830"/></g>
<g transform="translate(90.0,86.0)"><rect x="5" y="2" width="8" height="4" fill="#d6d6d6"/><rect x="1" y="6" width="16" height="7" fill="#d6d6d6"/><rect x="4" y="11" width="10" height="5" fill="#5cb6f2"/></g>
<g transform="translate(112.9,86.0)"><path d="M2,2 H13 L16,5 V14 H2 Z" fill="#d6d6d6"/><circle cx="9" cy="10" r="3.5" fill="#3b4453" stroke="#d6d6d6" stroke-width="1"/><path d="M11,12 L15,16" stroke="#f2b53a" stroke-width="1.6"/></g>
<g transform="translate(135.8,86.0)"><rect x="5" y="2" width="8" height="4" fill="#d6d6d6"/><rect x="1" y="6" width="15" height="6" fill="#d6d6d6"/><path d="M6,14 H14 M11,11 L15,14 L11,17" stroke="#5cb6f2" stroke-width="2" fill="none"/></g>
<g transform="translate(159.0,86.0)"><path d="M2,1 H13 L17,5 V17 H2 Z" fill="#9a1b2a"/><text x="9.5" y="14" font-size="5.5" fill="#fff" text-anchor="middle" font-weight="bold">DWF</text></g>
<g transform="translate(174.3,86.0)"><rect x="8.5" y="0" width="1.2" height="20" fill="#232830"/></g>
<g transform="translate(188.2,86.0)"><rect x="2" y="2" width="11" height="11" fill="#d6d6d6"/><circle cx="10" cy="15" r="2.3" fill="none" stroke="#d6d6d6" stroke-width="1.3"/><circle cx="15" cy="15" r="2.3" fill="none" stroke="#d6d6d6" stroke-width="1.3"/><path d="M9,6 L15,13 M16,6 L10,13" stroke="#d6d6d6" stroke-width="1.2"/></g>
<g transform="translate(210.1,86.0)"><path d="M2,2 H10 V13 H2 Z" fill="#d6d6d6"/><path d="M6,5 H13 L16,8 V17 H6 Z" fill="#d6d6d6" stroke="#3b4453" stroke-width="1"/></g>
<g transform="translate(233.6,86.0)"><rect x="2" y="3" width="10" height="13" fill="#d9a860"/><rect x="4" y="1" width="6" height="3" fill="#d6d6d6"/><path d="M8,7 H14 L17,10 V17 H8 Z" fill="#d6d6d6" stroke="#3b4453" stroke-width="1"/></g>
<g transform="translate(257.5,86.0)"><rect x="2" y="2" width="11" height="12" fill="#d6d6d6"/><rect x="4" y="4" width="7" height="3" fill="#5cb6f2"/><path d="M9,15 L15,9 L17,11 L11,17 Z" fill="#f2b53a"/></g>
<g transform="translate(280.2,86.0)"><rect x="1" y="6" width="11" height="8" fill="none" stroke="#d6d6d6" stroke-width="1.5"/><circle cx="12" cy="13" r="3.5" fill="none" stroke="#d6d6d6" stroke-width="1.5"/><path d="M9,9 L15,2 L17,4 L11,11 Z" fill="#f2b53a"/><rect x="14.5" y="1" width="3" height="3" fill="#e8423f"/></g>
<g transform="translate(295.2,86.0)"><rect x="8.5" y="0" width="1.2" height="20" fill="#232830"/></g>
<g transform="translate(309.3,86.0)"><path d="M2,8 L8,3 V6 Q16,6 16,13 Q13,9 8,10 V13 Z" fill="#d6d6d6"/></g>
<g transform="translate(327.0,86.0)"><path d="M5,8 H13 L9,12 Z" fill="#d6d6d6"/></g>
<g transform="translate(344.5,86.0)"><path d="M16,8 L10,3 V6 Q2,6 2,13 Q5,9 10,10 V13 Z" fill="#d6d6d6"/></g>
<g transform="translate(362.4,86.0)"><path d="M5,8 H13 L9,12 Z" fill="#d6d6d6"/></g>
<g transform="translate(373.2,86.0)"><rect x="8.5" y="0" width="1.2" height="20" fill="#232830"/></g>
<g transform="translate(386.7,86.0)"><path d="M4,9 V4 Q5,2 6,4 V8 V2.5 Q7.5,1 9,2.5 V8 V3 Q10.5,1.5 12,3 V9 V5 Q13.5,4 15,5 V11 Q15,17 9,17 Q6,17 3,12 L1,9 Q2,7.5 4,9 Z" fill="#d6d6d6"/></g>
<g transform="translate(409.6,86.0)"><path d="M2,4 H8 M5,1 V7 M2,10 H8" stroke="#d6d6d6" stroke-width="1.4"/><circle cx="12" cy="12" r="3" fill="none" stroke="#d6d6d6" stroke-width="1.4"/><path d="M14,14 L17,17" stroke="#f2b53a" stroke-width="1.6"/></g>
<g transform="translate(432.5,86.0)"><rect x="2" y="2" width="13" height="12" fill="none" stroke="#d6d6d6" stroke-width="1.4"/><circle cx="12" cy="12" r="3" fill="#3b4453" stroke="#d6d6d6" stroke-width="1.4"/><path d="M14,14 L17,17" stroke="#d6d6d6" stroke-width="1.6"/></g>
<g transform="translate(456.0,86.0)"><path d="M2,3 H5 M2,3 V6 M13,3 H16 V6 M2,16 V13 M2,16 H5" stroke="#d6d6d6" stroke-width="1.4" fill="none"/><path d="M5,5 Q9,1 13,5" stroke="#5cb6f2" stroke-width="2" fill="none"/><circle cx="10" cy="11" r="3" fill="none" stroke="#d6d6d6" stroke-width="1.4"/><path d="M12,13 L16,17" stroke="#f2b53a" stroke-width="1.6"/></g>
<g transform="translate(471.4,86.0)"><rect x="8.5" y="0" width="1.2" height="20" fill="#232830"/></g>
<g transform="translate(484.7,86.0)"><rect x="3" y="1" width="12" height="16" fill="#d6d6d6"/><rect x="5" y="3" width="8" height="5" fill="#5cb6f2"/><path d="M5,11 H13 M5,14 H13" stroke="#3b4453" stroke-width="1.2"/></g>
<g transform="translate(507.9,86.0)"><rect x="2" y="1" width="14" height="16" fill="none" stroke="#d6d6d6" stroke-width="1.4"/><path d="M6,3 V15" stroke="#d6d6d6" stroke-width="1" stroke-dasharray="1.5 1.5"/><rect x="8" y="4" width="3" height="3" fill="#d6d6d6"/><rect x="12" y="4" width="3" height="3" fill="#d6d6d6"/><rect x="8" y="9" width="3" height="3" fill="#d6d6d6"/><rect x="12" y="9" width="3" height="3" fill="#d6d6d6"/></g>
<g transform="translate(530.6,86.0)"><path d="M2,2 H12 L16,6 V17 H2 Z" fill="#d6d6d6"/><rect x="4" y="5" width="2" height="2" fill="#3b4453"/><rect x="8" y="5" width="2" height="2" fill="#3b4453"/><rect x="4" y="9" width="2" height="2" fill="#3b4453"/><rect x="8" y="9" width="2" height="2" fill="#3b4453"/></g>
<g transform="translate(553.7,86.0)"><path d="M2,5 L8,2 L16,4 V14 L10,17 L2,14 Z" fill="#d6d6d6"/></g>
<g transform="translate(577.0,86.0)"><rect x="1" y="1" width="9" height="9" fill="#f2b53a"/><rect x="7" y="9" width="10" height="8" fill="#d6d6d6"/><path d="M11,3 V8 M14,5 V8" stroke="#d6d6d6" stroke-width="1.4"/></g>
<g transform="translate(599.9,86.0)"><rect x="3" y="1" width="12" height="16" fill="#d6d6d6"/><rect x="5" y="3" width="8" height="3" fill="#3b4453"/><path d="M5,9 H13 M5,12 H13 M5,15 H13 M7.5,8 V16 M10.5,8 V16" stroke="#3b4453" stroke-width="1"/></g>
<g transform="translate(615.4,86.0)"><rect x="8.5" y="0" width="1.2" height="20" fill="#232830"/></g>
<g transform="translate(628.8,86.0)"><circle cx="9" cy="9" r="8" fill="#c8c8c8"/><text x="9" y="13.5" font-size="12" fill="#3b4453" text-anchor="middle" font-weight="bold">?</text></g>
<g transform="translate(661.5,86.0)"><path d="M2,6 L9,2 L16,6 L9,10 Z M2,9 L9,13 L16,9 M2,12 L9,16 L16,12" stroke="#d6d6d6" stroke-width="1.3" fill="#d6d6d6"/><rect x="10" y="9" width="7" height="8" fill="#d6d6d6" stroke="#3b4453"/></g>
<g transform="translate(984.9,86.0)"><circle cx="11" cy="4" r="3" fill="#d6d6d6"/><path d="M2,11 L9,8 L16,11 L9,14 Z" fill="#5cb6f2"/><path d="M2,14 L9,17 L16,14" stroke="#d6d6d6" stroke-width="1.3" fill="none"/></g>
<g transform="translate(1008.4,86.0)"><path d="M2,11 L9,8 L16,11 L9,14 Z M2,14 L9,17 L16,14" stroke="#d6d6d6" stroke-width="1.3" fill="#d6d6d6"/><path d="M4,5 Q9,0 12,6 M2,4 L5,2 L5,7 Z" stroke="#5cb6f2" stroke-width="1.6" fill="#5cb6f2"/></g>
<g transform="translate(1030.6,86.0)"><path d="M2,6 L9,2 L16,6 L9,10 Z M2,9 L9,13 L16,9 M2,12 L9,16 L16,12" stroke="#d6d6d6" stroke-width="1.3" fill="#d6d6d6"/><rect x="10" y="9" width="7" height="8" fill="#d6d6d6" stroke="#3b4453"/></g>
<rect x="683.4" y="84.6" width="299.5" height="21.0" fill="#ffffff" stroke="#c8c8c8" stroke-width="0.8"/>
<circle cx="694.7" cy="93" r="4.5" fill="#f2a531"/><rect x="692.5" y="97" width="4.4" height="3.5" fill="#888"/>
<circle cx="711" cy="95" r="4" fill="#f2a531"/><path d="M711,87.5 V90 M711,100 V102.5 M703.5,95 H706 M716,95 H718.5 M705.7,89.7 L707.5,91.5 M714.5,98.5 L716.3,100.3 M716.3,89.7 L714.5,91.5 M707.5,98.5 L705.7,100.3" stroke="#f2a531" stroke-width="1.2"/>
<path d="M726,91 V87 H730 M735,87 H739 V91 M726,99 V103 H730" stroke="#777" stroke-width="1.3" fill="none"/><circle cx="737" cy="100" r="3" fill="#f2a531"/>
<rect x="745.5" y="94" width="11" height="9" fill="#f2a531"/><path d="M749,94 V90 Q749,86.5 752.5,86.5 Q756,86.5 756,90" stroke="#f2a531" stroke-width="1.8" fill="none"/><rect x="750.5" y="97" width="1.5" height="3" fill="#fff"/>
<rect x="763.5" y="89" width="12" height="12" fill="#00ffff" stroke="#333" stroke-width="0.8"/>
<text x="780" y="100" font-size="13" fill="#111">4</text>
<path d="M970,93 L974,97 L978,93" stroke="#555" stroke-width="1.2" fill="none"/>
<rect x="1062.2" y="84.6" width="149.5" height="21.0" fill="#ffffff" stroke="#c8c8c8" stroke-width="0.8"/>
<rect x="1066" y="88.3" width="13.5" height="13.1" fill="#00ffff" stroke="#444" stroke-width="0.8"/>
<text x="1084" y="100.5" font-size="12" fill="#111">ByLayer</text>
<path d="M1198.8,93 L1202.8,97 L1206.8,93" stroke="#555" stroke-width="1.2" fill="none"/>
<rect x="1218.2" y="84.6" width="159.39999999999986" height="21.0" fill="#ffffff" stroke="#c8c8c8" stroke-width="0.8"/>
<path d="M1223,95 H1282.7" stroke="#111" stroke-width="1.2"/>
<text x="1288.5" y="100.5" font-size="12" fill="#111">ByLayer</text>
<path d="M1364.7,93 L1368.7,97 L1372.7,93" stroke="#555" stroke-width="1.2" fill="none"/>
<rect x="1383.9" y="84.6" width="125.09999999999991" height="21.0" fill="#ffffff" stroke="#c8c8c8" stroke-width="0.8"/>
<path d="M1389.3,95 H1423.6" stroke="#111" stroke-width="1.2"/>
<text x="1429.5" y="100.5" font-size="12" fill="#111">ByLayer</text>
<path d="M1495.6,93 L1499.6,97 L1503.6,93" stroke="#555" stroke-width="1.2" fill="none"/>
<rect x="1514.8" y="84.6" width="119.7" height="21" fill="#f4f4f4" stroke="#c8c8c8" stroke-width="0.8"/>
<text x="1525.7" y="100" font-size="13" fill="#8a8a8a">ByColor</text>
<path d="M1622,93 L1626,97 L1630,93" stroke="#aaa" stroke-width="1.2" fill="none"/>
<rect x="1636" y="84" width="71" height="23" fill="#3b4453"/>
<g transform="translate(658.0,113.0)"><path d="M1,10.15 L4.15,7 H13.15 V16 L10,19.15 Z" fill="#4c98d2"/><path d="M1,10.15 L4.15,7 H13.15 L10,10.15 Z" fill="#a6d6f8"/><rect x="1" y="10.15" width="9" height="9" fill="#6cbaf0"/><path d="M7,4.15 L10.15,1 H19.15 V10 L16,13.15 Z" fill="#4c98d2"/><path d="M7,4.15 L10.15,1 H19.15 L16,4.15 Z" fill="#a6d6f8"/><rect x="7" y="4.15" width="9" height="9" fill="#6cbaf0"/></g>
<g transform="translate(681.0,113.0)"><path d="M6,4.5 L9.5,1 H19.5 V11 L16,14.5 Z" fill="#b4b4b4"/><path d="M6,4.5 L9.5,1 H19.5 L16,4.5 Z" fill="#f0f0f0"/><rect x="6" y="4.5" width="10" height="10" fill="#d9d9d9"/><path d="M1,10 L4,7 H6 V13 H9 V15 L6,18 H1 Z" fill="#6cbaf0"/></g>
<g transform="translate(703.7,113.0)"><path d="M7,4.15 L10.15,1 H19.15 V10 L16,13.15 Z" fill="#b4b4b4"/><path d="M7,4.15 L10.15,1 H19.15 L16,4.15 Z" fill="#f0f0f0"/><rect x="7" y="4.15" width="9" height="9" fill="#d9d9d9"/><path d="M1,10.15 L4.15,7 H13.15 V16 L10,19.15 Z" fill="#b4b4b4"/><path d="M1,10.15 L4.15,7 H13.15 L10,10.15 Z" fill="#f0f0f0"/><rect x="1" y="10.15" width="9" height="9" fill="#d9d9d9"/><rect x="5" y="8" width="5" height="5" fill="#6cbaf0"/></g>
<g transform="translate(731.8,113.0)"><path d="M2,5 Q3,2 6,2 V17 H2 Z" fill="#d9d9d9"/><path d="M6,2 L11,4 V17 L6,16 Z" fill="#6cbaf0"/><path d="M12,10 H17 M15,8 L17,10 L15,12" stroke="#fff" stroke-width="1.3" fill="none"/></g>
<g transform="translate(755.3,113.0)"><path d="M5,1 V9 M1,5 H9" stroke="#fff" stroke-width="1.4"/><path d="M5,0 L3,2.5 H7 Z M5,10 L3,7.5 H7 Z M0,5 L2.5,3 V7 Z M10,5 L7.5,3 V7 Z" fill="#fff"/><path d="M10,7 H16 V16" stroke="#d9d9d9" stroke-width="1.2" fill="none"/><rect x="7" y="10" width="8" height="8" fill="#6cbaf0"/></g>
<g transform="translate(778.7,113.0)"><path d="M7,1 H17 V11 L14,14 V4 H4 Z" fill="#6cbaf0"/><rect x="1.5" y="4.5" width="13" height="13" fill="none" stroke="#d9d9d9" stroke-width="1.4"/><rect x="4" y="7" width="8" height="8" fill="#d9d9d9"/></g>
<g transform="translate(801.4,113.0)"><path d="M1,17 V9 L6,4 L9,6 V17 Z" fill="#d9d9d9"/><path d="M6,8 L11,4 L15,11 L10,15 Z" fill="#6cbaf0"/><path d="M12,1 L17,6 M17,1 L12,6" stroke="#e8423f" stroke-width="1.8"/></g>
<g transform="translate(824.9,113.0)"><path d="M7,3 A3.5,3.5 0 1 0 8,7" stroke="#fff" stroke-width="1.3" fill="none"/><path d="M5,1 L8,3 L5,5 Z" fill="#fff"/><path d="M9,7 H16 V16" stroke="#d9d9d9" stroke-width="1.2" fill="none"/><rect x="7" y="9" width="8" height="8" fill="#6cbaf0"/></g>
<g transform="translate(847.8,113.0)"><path d="M1,17 V9 L6,4 L9,6 V17 Z" fill="#d9d9d9"/><path d="M6,6 L11,3 L15,13 L10,16 Z" fill="#6cbaf0"/><path d="M14,9 L16,2 M14,4 L16,2 L17,5" stroke="#fff" stroke-width="1.1" fill="none"/></g>
<g transform="translate(870.8,113.0)"><path d="M7,4.15 L10.15,1 H19.15 V10 L16,13.15 Z" fill="#b4b4b4"/><path d="M7,4.15 L10.15,1 H19.15 L16,4.15 Z" fill="#f0f0f0"/><rect x="7" y="4.15" width="9" height="9" fill="#d9d9d9"/><rect x="1" y="8" width="9" height="10" fill="#6cbaf0"/><path d="M2,2 L4,1 V4" stroke="#fff" stroke-width="1" fill="none"/></g>
<g transform="translate(893.5,113.0)"><rect x="1" y="1" width="5" height="5" fill="#6cbaf0"/><rect x="6" y="1" width="5" height="5" fill="#e8423f"/><rect x="1" y="6" width="5" height="5" fill="#f0a070"/><path d="M6,10.15 L9.15,7 H18.15 V16 L15,19.15 Z" fill="#4c98d2"/><path d="M6,10.15 L9.15,7 H18.15 L15,10.15 Z" fill="#a6d6f8"/><rect x="6" y="10.15" width="9" height="9" fill="#6cbaf0"/></g>
<g transform="translate(922.8,113.0)"><path d="M1,17 V6 L5,2 H11 Q16,4 16,9 V14 L13,17 Z" fill="#d9d9d9"/><path d="M11,2 Q16,4 16,9 L13,11 Q13,6 9,4 Z" fill="#6cbaf0"/></g>
<g transform="translate(945.8,113.0)"><path d="M1,12 L8,2 H13 L17,7 V17 H5 Z" fill="#d9d9d9"/><path d="M3,9 L9,3 L13,6 L7,12 Z" fill="#6cbaf0"/><path d="M1,12 L5,17 H17" fill="#b4b4b4"/></g>
<g transform="translate(968.5,113.0)"><path d="M8,8.15 L11.15,5 H20.15 V14 L17,17.15 Z" fill="#b4b4b4"/><path d="M8,8.15 L11.15,5 H20.15 L17,8.15 Z" fill="#f0f0f0"/><rect x="8" y="8.15" width="9" height="9" fill="#d9d9d9"/><path d="M4,17 V4 M7,17 V6" stroke="#6cbaf0" stroke-width="1.2"/><path d="M3,2 L5,1 V4" stroke="#fff" stroke-width="1" fill="none"/></g>
<g transform="translate(992.0,113.0)"><rect x="1" y="1" width="5" height="5" fill="#6cbaf0"/><rect x="6" y="1" width="5" height="5" fill="#e8423f"/><rect x="1" y="6" width="5" height="5" fill="#f0a070"/><path d="M6,10.15 L9.15,7 H18.15 V16 L15,19.15 Z" fill="#b4b4b4"/><path d="M6,10.15 L9.15,7 H18.15 L15,10.15 Z" fill="#f0f0f0"/><rect x="6" y="10.15" width="9" height="9" fill="#d9d9d9"/><path d="M7,11 H16 M7,13 H16" stroke="#6cbaf0" stroke-width="1"/></g>
<g transform="translate(1021.2,113.0)"><path d="M1,4 H7 M4,1 V7" stroke="#4ccb74" stroke-width="2"/><rect x="6" y="6" width="11" height="11" fill="#d9d9d9"/><rect x="9" y="9" width="5" height="5" fill="none" stroke="#4c98d2" stroke-width="1.3"/></g>
<g transform="translate(1043.5,113.0)"><path d="M7,4.15 L10.15,1 H19.15 V10 L16,13.15 Z" fill="#b4b4b4"/><path d="M7,4.15 L10.15,1 H19.15 L16,4.15 Z" fill="#f0f0f0"/><rect x="7" y="4.15" width="9" height="9" fill="#d9d9d9"/><path d="M4,10 V13 M2,17 L3,13 H6 L7,17 Z" stroke="#f2b53a" stroke-width="1.3" fill="#f2b53a"/></g>
<g transform="translate(1066.8,113.0)"><path d="M1,7 L4,4 H7 V16 L4,17 H1 Z" fill="#d9d9d9"/><path d="M11,6 L14,3 H17 V14 L14,17 H11 Z" fill="#6cbaf0"/><path d="M9,1 V18" stroke="#6cbaf0" stroke-width="1.2"/></g>
<g transform="translate(1089.7,113.0)"><path d="M1,5.8999999999999995 L5.8999999999999995,1 H19.9 V15 L15,19.9 Z" fill="#b4b4b4"/><path d="M1,5.8999999999999995 L5.8999999999999995,1 H19.9 L15,5.8999999999999995 Z" fill="#f0f0f0"/><rect x="1" y="5.8999999999999995" width="14" height="14" fill="#d9d9d9"/><rect x="3" y="8" width="10" height="8" fill="#4c98d2"/><rect x="3" y="8" width="4" height="5" fill="#222"/><path d="M7,13 H13 V16 H3 V13 Z" fill="#8cc8f2"/></g>
<g transform="translate(1113.6,113.0)"><path d="M6,4.5 L9.5,1 H19.5 V11 L16,14.5 Z" fill="#b4b4b4"/><path d="M6,4.5 L9.5,1 H19.5 L16,4.5 Z" fill="#f0f0f0"/><rect x="6" y="4.5" width="10" height="10" fill="#d9d9d9"/><path d="M1,13 L4,16 L9,10" stroke="#4ccb74" stroke-width="2" fill="none"/></g>
<g transform="translate(14.9,113.0)"><path d="M2,2 V17 M16,2 V17" stroke="#d6d6d6" stroke-width="1.4"/><path d="M3,9 H15" stroke="#5cb6f2" stroke-width="1.5"/><path d="M3,9 L6,7 V11 Z M15,9 L12,7 V11 Z" fill="#5cb6f2"/></g>
<g transform="translate(37.8,113.0)"><path d="M1,5 L6,1 M12,17 L17,13" stroke="#d6d6d6" stroke-width="1.4"/><path d="M4,3 L14,15" stroke="#5cb6f2" stroke-width="1.5"/></g>
<g transform="translate(60.7,113.0)"><path d="M3,16 Q3,4 15,3" stroke="#5cb6f2" stroke-width="1.6" fill="none"/><path d="M7,17 Q7,8 16,7" stroke="#d6d6d6" stroke-width="1.4" fill="none"/><path d="M16,1 V8 M1,17 H8" stroke="#d6d6d6" stroke-width="1.3"/></g>
<g transform="translate(83.6,113.0)"><path d="M2,3 V17 H16" stroke="#d6d6d6" stroke-width="1.3" fill="none"/><path d="M8,5 V17 M2,11 H14" stroke="#5cb6f2" stroke-width="1.4"/><text x="8" y="5" font-size="5" fill="#5cb6f2" text-anchor="middle">X</text><text x="15.5" y="12" font-size="5" fill="#5cb6f2" text-anchor="middle">Y</text></g>
<g transform="translate(99.2,113.0)"><rect x="8.5" y="0" width="1.2" height="20" fill="#232830"/></g>
<g transform="translate(113.0,113.0)"><path d="M1,16 Q2,3 15,2" stroke="#d6d6d6" stroke-width="1.4" fill="none"/><path d="M5,6 L15,16" stroke="#5cb6f2" stroke-width="1.5"/></g>
<g transform="translate(135.8,113.0)"><path d="M1,16 Q2,3 15,2" stroke="#d6d6d6" stroke-width="1.4" fill="none"/><path d="M6,8 L9,13 L11,9 L16,14" stroke="#5cb6f2" stroke-width="1.5" fill="none"/></g>
<g transform="translate(159.0,113.0)"><circle cx="9" cy="9" r="7.5" fill="none" stroke="#d6d6d6" stroke-width="1.4"/><path d="M4,4 L14,14" stroke="#5cb6f2" stroke-width="1.5"/></g>
<g transform="translate(181.8,113.0)"><path d="M1,17 H17 M1,17 L12,3" stroke="#d6d6d6" stroke-width="1.4"/><path d="M8,8 Q13,10 13,17" stroke="#5cb6f2" stroke-width="1.5" fill="none"/></g>
<g transform="translate(197.2,113.0)"><rect x="8.5" y="0" width="1.2" height="20" fill="#232830"/></g>
<g transform="translate(210.7,113.0)"><path d="M2,2 V17 M16,2 V17 M2,3 H16" stroke="#d6d6d6" stroke-width="1.3"/><path d="M10,6 L6,11 H9 L7,16 L12,10 H9 Z" fill="#f2b53a"/></g>
<g transform="translate(233.0,113.0)"><path d="M2,3 V17" stroke="#d6d6d6" stroke-width="1.3"/><path d="M3,6 H16 M3,13 H11" stroke="#5cb6f2" stroke-width="1.5"/><path d="M16,3 V9 M11,10 V16" stroke="#d6d6d6" stroke-width="1.3"/></g>
<g transform="translate(256.3,113.0)"><path d="M2,2 V17 M9,2 V17 M16,2 V17" stroke="#d6d6d6" stroke-width="1.3"/><path d="M3,8 H15" stroke="#5cb6f2" stroke-width="1.5"/></g>
<g transform="translate(279.8,113.0)"><path d="M3,2 H15 M3,17 H15" stroke="#d6d6d6" stroke-width="1.3"/><path d="M9,3 V16" stroke="#d6d6d6" stroke-width="1.3"/><rect x="8" y="5" width="4" height="9" fill="#f2b53a"/></g>
<g transform="translate(302.7,113.0)"><path d="M1,8 H9 M11,8 H17" stroke="#5cb6f2" stroke-width="1.5"/><path d="M9,2 V17 M5,17 H13" stroke="#d6d6d6" stroke-width="1.3"/><path d="M17,8 L13,5 V11 Z" fill="#5cb6f2"/></g>
<g transform="translate(318.3,113.0)"><rect x="8.5" y="0" width="1.2" height="20" fill="#232830"/></g>
<g transform="translate(332.0,113.0)"><rect x="1" y="3" width="16" height="12" fill="none" stroke="#d6d6d6" stroke-width="1.3"/><path d="M9,3 V15" stroke="#d6d6d6" stroke-width="1.3"/><circle cx="5" cy="9" r="2.5" fill="none" stroke="#d6d6d6" stroke-width="1.2"/><text x="13" y="13" font-size="8" fill="#d6d6d6" text-anchor="middle">1</text></g>
<g transform="translate(354.5,113.0)"><circle cx="9" cy="9" r="7.5" fill="none" stroke="#d6d6d6" stroke-width="1.3"/><path d="M6,9 H12 M9,6 V12" stroke="#5cb6f2" stroke-width="1.5"/></g>
<g transform="translate(377.8,113.0)"><path d="M2,1 V17 M16,1 V17 M2,3 H16" stroke="#d6d6d6" stroke-width="1.3"/><path d="M5,11 L8,14 L13,8" stroke="#4ccb74" stroke-width="2" fill="none"/></g>
<g transform="translate(400.7,113.0)"><path d="M1,10 H5 L8,3 L11,16 L13,9 H17" stroke="#d6d6d6" stroke-width="1.4" fill="none"/></g>
<g transform="translate(416.2,113.0)"><rect x="8.5" y="0" width="1.2" height="20" fill="#232830"/></g>
<g transform="translate(429.6,113.0)"><path d="M1,10 V17 M17,10 V17 M2,15 H16" stroke="#d6d6d6" stroke-width="1.3"/><path d="M6,11 L13,3 L15,5 L8,12 Z" fill="#f2b53a"/><rect x="13" y="1" width="4" height="3" fill="#e8423f"/></g>
<g transform="translate(452.5,113.0)"><path d="M1,10 V17 M17,10 V17 M2,15 H16" stroke="#d6d6d6" stroke-width="1.3"/><text x="9" y="10" font-size="10" fill="#d6d6d6" text-anchor="middle">A</text></g>
<g transform="translate(475.4,113.0)"><path d="M1,2 V17 M17,2 V17 M2,3 H16" stroke="#d6d6d6" stroke-width="1.3"/><path d="M5,10 Q9,5 13,9 M13,12 Q9,16 5,12" stroke="#4ccb74" stroke-width="1.8" fill="none"/></g>
<g transform="translate(491.3,113.0)"><rect x="8.5" y="0" width="1.2" height="20" fill="#232830"/></g>
<g transform="translate(624.8,113.0)"><path d="M1,10 V17 M17,10 V17 M2,14 H16" stroke="#d6d6d6" stroke-width="1.3"/><path d="M8,12 L15,4" stroke="#f2b53a" stroke-width="2"/></g>
<g transform="translate(719.0,113.0)"><rect x="8.5" y="0" width="1.2" height="20" fill="#232830"/></g>
<g transform="translate(908.8,113.0)"><rect x="8.5" y="0" width="1.2" height="20" fill="#232830"/></g>
<g transform="translate(1007.2,113.0)"><rect x="8.5" y="0" width="1.2" height="20" fill="#232830"/></g>
<rect x="503.3" y="111.5" width="119.49999999999994" height="21.30000000000001" fill="#ffffff" stroke="#c8c8c8" stroke-width="0.8"/>
<text x="522" y="127.5" font-size="13" fill="#111" textLength="26.5" lengthAdjust="spacingAndGlyphs">AXIS</text>
<path d="M609.9,120 L613.9,124 L617.9,120" stroke="#555" stroke-width="1.2" fill="none"/>
<g transform="translate(14.9,140.0)"><path d="M1,5 Q5,3 9,6 Q13,3 17,5 V16 Q13,14 9,17 Q5,14 1,16 Z" fill="#d6d6d6"/><path d="M9,6 V17" stroke="#3b4453" stroke-width="0.8"/><path d="M6,2 L13,9 L11,11 L4,4 Z" fill="#f2b53a"/><rect x="11" y="0" width="4" height="3" fill="#e8423f"/></g>
<g transform="translate(37.8,140.0)"><path d="M1,6 Q5,4 9,7 Q13,4 17,6 V17 Q13,15 9,18 Q5,15 1,17 Z" fill="#d6d6d6"/><path d="M9,7 V18" stroke="#3b4453" stroke-width="0.8"/><path d="M6,4 L9,7 L14,1" stroke="#4ccb74" stroke-width="2" fill="none"/></g>
<g transform="translate(60.7,140.0)"><path d="M2,6 L7,2 H17 L12,6 Z" fill="#d6d6d6"/><path d="M2,9 H14 M2,12 H12 M2,15 H11" stroke="#d6d6d6" stroke-width="1.4"/><rect x="12" y="10" width="6" height="8" fill="#f08080"/></g>
</svg>
<svg width="1707" height="1355" style="position:absolute;left:0;top:0">
<rect x="4.5" y="166.0" width="24" height="447.0" fill="#3a4352" stroke="#2b313b" stroke-width="1"/>
<rect x="1675.5" y="166.0" width="24" height="403.0" fill="#3a4352" stroke="#2b313b" stroke-width="1"/>
<rect x="8.0" y="168.5" width="1.4" height="1.4" fill="#9aa0a8"/>
<rect x="8.0" y="171" width="1.4" height="1.4" fill="#9aa0a8"/>
<rect x="10.4" y="168.5" width="1.4" height="1.4" fill="#9aa0a8"/>
<rect x="10.4" y="171" width="1.4" height="1.4" fill="#9aa0a8"/>
<rect x="12.8" y="168.5" width="1.4" height="1.4" fill="#9aa0a8"/>
<rect x="12.8" y="171" width="1.4" height="1.4" fill="#9aa0a8"/>
<rect x="15.2" y="168.5" width="1.4" height="1.4" fill="#9aa0a8"/>
<rect x="15.2" y="171" width="1.4" height="1.4" fill="#9aa0a8"/>
<rect x="17.6" y="168.5" width="1.4" height="1.4" fill="#9aa0a8"/>
<rect x="17.6" y="171" width="1.4" height="1.4" fill="#9aa0a8"/>
<rect x="20.0" y="168.5" width="1.4" height="1.4" fill="#9aa0a8"/>
<rect x="20.0" y="171" width="1.4" height="1.4" fill="#9aa0a8"/>
<rect x="22.4" y="168.5" width="1.4" height="1.4" fill="#9aa0a8"/>
<rect x="22.4" y="171" width="1.4" height="1.4" fill="#9aa0a8"/>
<rect x="24.8" y="168.5" width="1.4" height="1.4" fill="#9aa0a8"/>
<rect x="24.8" y="171" width="1.4" height="1.4" fill="#9aa0a8"/>
<rect x="1679.0" y="168.5" width="1.4" height="1.4" fill="#9aa0a8"/>
<rect x="1679.0" y="171" width="1.4" height="1.4" fill="#9aa0a8"/>
<rect x="1681.4" y="168.5" width="1.4" height="1.4" fill="#9aa0a8"/>
<rect x="1681.4" y="171" width="1.4" height="1.4" fill="#9aa0a8"/>
<rect x="1683.8" y="168.5" width="1.4" height="1.4" fill="#9aa0a8"/>
<rect x="1683.8" y="171" width="1.4" height="1.4" fill="#9aa0a8"/>
<rect x="1686.2" y="168.5" width="1.4" height="1.4" fill="#9aa0a8"/>
<rect x="1686.2" y="171" width="1.4" height="1.4" fill="#9aa0a8"/>
<rect x="1688.6" y="168.5" width="1.4" height="1.4" fill="#9aa0a8"/>
<rect x="1688.6" y="171" width="1.4" height="1.4" fill="#9aa0a8"/>
<rect x="1691.0" y="168.5" width="1.4" height="1.4" fill="#9aa0a8"/>
<rect x="1691.0" y="171" width="1.4" height="1.4" fill="#9aa0a8"/>
<rect x="1693.4" y="168.5" width="1.4" height="1.4" fill="#9aa0a8"/>
<rect x="1693.4" y="171" width="1.4" height="1.4" fill="#9aa0a8"/>
<rect x="1695.8" y="168.5" width="1.4" height="1.4" fill="#9aa0a8"/>
<rect x="1695.8" y="171" width="1.4" height="1.4" fill="#9aa0a8"/>
<g transform="translate(7.5,176.0)"><path d="M3,15 L15,3" stroke="#d6d6d6" stroke-width="1.2"/><rect x="2" y="14" width="2.4" height="2.4" fill="#5cb6f2"/><rect x="14" y="2" width="2.4" height="2.4" fill="#5cb6f2"/></g>
<g transform="translate(7.5,198.2)"><path d="M3,15 L15,3" stroke="#d6d6d6" stroke-width="1.2"/><path d="M15,3 L10,4 L14,8 Z M3,15 L8,14 L4,10 Z" fill="#d6d6d6"/><rect x="8" y="8" width="2.2" height="2.2" fill="#5cb6f2"/></g>
<g transform="translate(7.5,220.0)"><path d="M3,14 H10 Q16,14 16,9 Q16,5 11,5" stroke="#d6d6d6" stroke-width="1.2" fill="none"/><rect x="2" y="13" width="2.2" height="2.2" fill="#5cb6f2"/><rect x="10" y="13" width="2.2" height="2.2" fill="#5cb6f2"/><rect x="10" y="4" width="2.2" height="2.2" fill="#5cb6f2"/></g>
<g transform="translate(7.5,242.1)"><path d="M9,2 L16,7 L13,15 H5 L2,7 Z" stroke="#d6d6d6" stroke-width="1.2" fill="none"/><rect x="8" y="8" width="2.2" height="2.2" fill="#5cb6f2"/><rect x="12" y="14" width="2.2" height="2.2" fill="#5cb6f2"/></g>
<g transform="translate(7.5,263.7)"><rect x="3" y="5" width="13" height="9" stroke="#d6d6d6" stroke-width="1.2" fill="none"/><rect x="2" y="4" width="2.2" height="2.2" fill="#5cb6f2"/><rect x="15" y="13" width="2.2" height="2.2" fill="#5cb6f2"/></g>
<g transform="translate(7.5,286.4)"><path d="M3,15 Q4,5 15,3" stroke="#d6d6d6" stroke-width="1.2" fill="none" stroke-dasharray="3 1.5"/><rect x="2" y="14" width="2.2" height="2.2" fill="#5cb6f2"/><rect x="14" y="2" width="2.2" height="2.2" fill="#5cb6f2"/></g>
<g transform="translate(7.5,308.0)"><circle cx="9" cy="9" r="7.5" stroke="#d6d6d6" stroke-width="1.2" fill="none"/><path d="M9,9 L14,4" stroke="#5cb6f2" stroke-width="1.3"/></g>
<g transform="translate(7.5,330.1)"><path d="M3,12 Q1,9 4,7 Q4,3 8,4 Q11,1 14,5 Q18,6 16,10 Q17,14 13,14 Q10,17 7,14 Q3,15 3,12 Z" stroke="#d6d6d6" stroke-width="1.2" fill="none"/></g>
<g transform="translate(7.5,352.3)"><path d="M3,15 Q4,6 8,8 Q12,13 15,3" stroke="#d6d6d6" stroke-width="1.2" fill="none" stroke-dasharray="3 1.5"/><rect x="2" y="14" width="2.2" height="2.2" fill="#5cb6f2"/><rect x="14" y="2" width="2.2" height="2.2" fill="#5cb6f2"/><rect x="7" y="7" width="2.2" height="2.2" fill="#5cb6f2"/></g>
<g transform="translate(7.5,373.8)"><ellipse cx="9" cy="10" rx="7.5" ry="4.5" stroke="#d6d6d6" stroke-width="1.2" fill="none"/><rect x="1" y="9" width="2.2" height="2.2" fill="#5cb6f2"/><rect x="15" y="9" width="2.2" height="2.2" fill="#5cb6f2"/><rect x="8" y="4.5" width="2.2" height="2.2" fill="#5cb6f2"/></g>
<g transform="translate(7.5,394.8)"><path d="M3,12 Q1,6 9,5 Q15,5 16,9" stroke="#d6d6d6" stroke-width="1.2" fill="none"/><rect x="14" y="8" width="2.2" height="2.2" fill="#5cb6f2"/><rect x="7" y="12" width="2.2" height="2.2" fill="#5cb6f2"/></g>
<g transform="translate(7.5,417.9)"><path d="M8,1 H14 L17,4 V15 H8 Z" fill="#5cb6f2"/><rect x="1" y="8" width="9" height="7" fill="none" stroke="#d6d6d6" stroke-width="1.2"/><circle cx="11" cy="13" r="3" fill="none" stroke="#d6d6d6" stroke-width="1.2"/></g>
<g transform="translate(7.5,441.0)"><rect x="1" y="7" width="9" height="7" fill="none" stroke="#d6d6d6" stroke-width="1.2"/><circle cx="11" cy="13" r="3" fill="none" stroke="#d6d6d6" stroke-width="1.2"/><circle cx="14" cy="4" r="3" fill="#f2b53a"/></g>
<g transform="translate(7.5,461.8)"><rect x="8" y="3" width="2" height="2" fill="#d6d6d6"/><rect x="3" y="8" width="2" height="2" fill="#d6d6d6"/><rect x="13" y="8" width="2" height="2" fill="#d6d6d6"/><rect x="8" y="13" width="2" height="2" fill="#d6d6d6"/></g>
<g transform="translate(7.5,484.0)"><path d="M1,4 H17 M1,14 H17 M4,1 V17 M14,1 V17" stroke="#d6d6d6" stroke-width="1.2"/><rect x="5" y="5" width="8" height="8" fill="#5cb6f2"/><path d="M5,11 L11,5 M7,13 L13,7" stroke="#3b4453" stroke-width="0.9"/></g>
<g transform="translate(7.5,506.0)"><path d="M1,4 H17 M1,14 H17 M4,1 V17 M14,1 V17" stroke="#d6d6d6" stroke-width="1.2"/><rect x="5" y="5" width="8" height="8" fill="#5cb6f2"/><rect x="5" y="9" width="8" height="4" fill="#4a5668"/></g>
<g transform="translate(7.5,527.7)"><path d="M2,3 H12 L17,9 V16 H2 Z" fill="#d6d6d6"/><circle cx="8" cy="9" r="2" fill="#3b4453"/></g>
<g transform="translate(7.5,549.8)"><rect x="2" y="3" width="14" height="13" fill="none" stroke="#d6d6d6" stroke-width="1.2"/><path d="M2,7 H16 M2,10 H16 M2,13 H16 M7,7 V16 M11,7 V16" stroke="#d6d6d6" stroke-width="1"/></g>
<g transform="translate(7.5,572.0)"><text x="9" y="16" font-size="17" fill="#d6d6d6" text-anchor="middle">A</text></g>
<g transform="translate(7.5,592.3)"><circle cx="5" cy="5" r="3.5" fill="#4ccb74"/><circle cx="13" cy="14" r="3.5" fill="#5cb6f2"/><path d="M9,4 H13 V9" stroke="#fff" stroke-width="1.2" fill="none"/></g>
<g transform="translate(1678.5,176.0)"><path d="M6,12 L14,3 L17,6 L9,15 Z" fill="#f2b53a"/><path d="M6,12 L9,15 L7,17 L4,14 Z" fill="#e8423f"/><path d="M1,17 H4 M10,17 H17" stroke="#5cb6f2" stroke-width="1.2"/></g>
<g transform="translate(1678.5,197.3)"><circle cx="5" cy="5" r="3.5" fill="none" stroke="#d6d6d6" stroke-width="1.2"/><path d="M9,4 H15 V8" stroke="#d6d6d6" stroke-width="1.2" fill="none"/><ellipse cx="9" cy="13" rx="3.5" ry="3.5" fill="none" stroke="#5cb6f2" stroke-width="1.2"/><ellipse cx="14" cy="13" rx="3.5" ry="3.5" fill="none" stroke="#5cb6f2" stroke-width="1.2"/></g>
<g transform="translate(1678.5,220.3)"><path d="M8,3 V16 H2 Z" fill="none" stroke="#d6d6d6" stroke-width="1.2"/><path d="M11,3 V16 H17 Z" fill="#5cb6f2" stroke="#5cb6f2"/></g>
<g transform="translate(1678.5,241.6)"><path d="M16,5 H7 Q2,5 2,10 Q2,15 7,15 H16" stroke="#5cb6f2" stroke-width="1.3" fill="none"/><path d="M16,8 H8 Q5,8 5,10 Q5,12 8,12 H16" stroke="#d6d6d6" stroke-width="1.3" fill="none"/></g>
<g transform="translate(1678.5,263.7)"><rect x="2" y="2" width="5" height="5" fill="none" stroke="#d6d6d6" stroke-width="1.2"/><rect x="10" y="2" width="5" height="5" fill="none" stroke="#5cb6f2" stroke-width="1.2"/><rect x="2" y="10" width="5" height="5" fill="none" stroke="#5cb6f2" stroke-width="1.2"/><rect x="10" y="10" width="5" height="5" fill="none" stroke="#5cb6f2" stroke-width="1.2"/></g>
<g transform="translate(1678.5,285.8)"><path d="M9,1 V17 M1,9 H17" stroke="#d6d6d6" stroke-width="1.6"/><path d="M9,0 L6,4 H12 Z M9,18 L6,14 H12 Z M0,9 L4,6 V12 Z M18,9 L14,6 V12 Z" fill="#d6d6d6"/></g>
<g transform="translate(1678.5,308.0)"><path d="M14,5 A6.5,6.5 0 1 0 15.5,10" stroke="#d6d6d6" stroke-width="1.4" fill="none"/><path d="M11,2 L16,4 L13,8 Z" fill="#d6d6d6"/></g>
<g transform="translate(1678.5,330.1)"><rect x="2" y="8" width="8" height="8" fill="none" stroke="#d6d6d6" stroke-width="1.2"/><path d="M2,8 V2 H16 V16 H10" stroke="#5cb6f2" stroke-width="1.2" fill="none"/></g>
<g transform="translate(1678.5,352.3)"><path d="M2,2 H7 V16 H2 Z" fill="none" stroke="#d6d6d6" stroke-width="1.2"/><path d="M9,2 L13,2 L17,16 H9" stroke="#5cb6f2" stroke-width="1.2" fill="none"/><path d="M4,12 H11" stroke="#d6d6d6" stroke-width="1.2"/></g>
<g transform="translate(1678.5,373.8)"><path d="M2,2 H17" stroke="#5cb6f2" stroke-width="1.2" stroke-dasharray="2 1"/><path d="M5,3 L12,13 M12,4 L8,12" stroke="#d6d6d6" stroke-width="1.4"/><circle cx="8" cy="14" r="2.3" fill="none" stroke="#d6d6d6" stroke-width="1.2"/><circle cx="13" cy="15" r="2.3" fill="none" stroke="#d6d6d6" stroke-width="1.2"/></g>
<g transform="translate(1678.5,395.4)"><path d="M2,9 H13" stroke="#d6d6d6" stroke-width="1.2"/><path d="M2,12 H12" stroke="#5cb6f2" stroke-width="1.2" stroke-dasharray="2 1"/><path d="M15,2 V17" stroke="#d6d6d6" stroke-width="1.3"/><path d="M14,9 L10,6 V12 Z" fill="#d6d6d6"/></g>
<g transform="translate(1678.5,418.0)"><path d="M2,5 V16 H16 V5 H10" stroke="#d6d6d6" stroke-width="1.3" fill="none"/><path d="M12,1 V5" stroke="#5cb6f2" stroke-width="1.3"/></g>
<g transform="translate(1678.5,440.0)"><path d="M2,5 V16 H16 V5 H11 M7,5 H2" stroke="#d6d6d6" stroke-width="1.3" fill="none"/><path d="M7,1 V6 M11,1 V6" stroke="#5cb6f2" stroke-width="1.3"/></g>
<g transform="translate(1678.5,462.7)"><path d="M1,9 H17" stroke="#d6d6d6" stroke-width="1.2"/><path d="M5,6 L9,9 L5,12 Z M13,6 L9,9 L13,12 Z" fill="#5cb6f2"/></g>
<g transform="translate(1678.5,483.8)"><path d="M2,16 V10 M5,7 L11,2 M12,2 H17" stroke="#d6d6d6" stroke-width="1.2"/><path d="M2,10 L11,2" stroke="#5cb6f2" stroke-width="1.3"/></g>
<g transform="translate(1678.5,505.7)"><path d="M2,16 V11 M12,2 H17" stroke="#d6d6d6" stroke-width="1.2"/><path d="M2,11 Q2,2 12,2" stroke="#5cb6f2" stroke-width="1.3" fill="none"/></g>
<g transform="translate(1678.5,527.7)"><path d="M2,16 Q2,8 6,8 Q9,8 10,12 Q12,15 16,4" stroke="#5cb6f2" stroke-width="1.3" fill="none"/><path d="M2,17 V13 M16,4 V1" stroke="#d6d6d6" stroke-width="1.2"/></g>
<g transform="translate(1678.5,550.4)"><path d="M2,6 L6,2 H16 V12 L12,16 H2 Z" fill="none" stroke="#5cb6f2" stroke-width="1.3"/><rect x="4" y="6" width="8" height="8" fill="none" stroke="#d6d6d6" stroke-width="1.3"/></g>
</svg>
<div style="position:absolute;left:0px;top:1291px;width:1707px;height:64px;background:#222933"></div>
<div style="position:absolute;left:3.9px;top:1291px;width:1699.1px;height:4px;background:#3b4453"></div>
<svg width="1707" height="1355" style="position:absolute;left:0;top:0"><polygon points="55.4,1295.2 102.8,1295.2 93.6,1318.4 45.3,1318.4" fill="#3b4453"/><path d="M20,1301.5 H36 M20,1307 H36 M20,1312.5 H36" stroke="#e8e8e8" stroke-width="2"/><path d="M150.5,1314 L155.5,1299 M192.5,1314 L197.5,1299" stroke="#5a6270" stroke-width="1.2"/><path d="M174.4,1299 V1315 M166.4,1307 H182.4" stroke="#e8e8e8" stroke-width="2"/></svg>
<div style="position:absolute;left:62px;top:1299.5px;font-size:12.2px;color:#f0f0f0;white-space:nowrap;line-height:14.2px;font-weight:bold"><span style="display:inline-block;width:1em;text-align:center">模</span><span style="display:inline-block;width:1em;text-align:center">型</span></div>
<div style="position:absolute;left:110px;top:1299px;font-size:13px;color:#e0e0e0;white-space:nowrap;line-height:15px;"><span style="display:inline-block;width:1em;text-align:center">布</span><span style="display:inline-block;width:1em;text-align:center">局</span>1</div>
<svg width="1707" height="1355" style="position:absolute;left:0;top:0"><rect x="5.8" y="1324.5" width="483.2" height="24.3" fill="#3b4453"/><rect x="492.7" y="1324.5" width="139.9" height="24.3" fill="#3b4453"/><rect x="636.2" y="1324.5" width="29.8" height="24.3" fill="#3b4453"/><rect x="668.9" y="1324.5" width="63.6" height="24.3" fill="#3b4453"/><rect x="736.0" y="1324.5" width="23.8" height="24.3" fill="#3b4453"/><rect x="761.6" y="1324.5" width="22.4" height="24.3" fill="#3b4453"/><rect x="786.9" y="1324.5" width="22.1" height="24.3" fill="#3b4453"/><rect x="809.4" y="1324.5" width="80.5" height="24.3" fill="#3b4453"/><rect x="891.0" y="1324.5" width="64.0" height="24.3" fill="#3b4453"/><rect x="956.0" y="1324.5" width="23.9" height="24.3" fill="#3b4453"/><rect x="981.6" y="1324.5" width="22.4" height="24.3" fill="#3b4453"/><rect x="1005.9" y="1324.5" width="24.1" height="24.3" fill="#3b4453"/><rect x="1031.2" y="1324.5" width="39.8" height="24.3" fill="#3b4453"/><rect x="1075.0" y="1324.5" width="101.7" height="24.3" fill="#3b4453"/><rect x="1180.4" y="1324.5" width="146.3" height="24.3" fill="#3b4453"/><rect x="1330.3" y="1324.5" width="38.7" height="24.3" fill="#3b4453"/><rect x="1371.2" y="1324.5" width="23.5" height="24.3" fill="#3b4453"/><rect x="1398.0" y="1324.5" width="96.0" height="24.3" fill="#3b4453"/><rect x="1496.6" y="1324.5" width="23.4" height="24.3" fill="#3b4453"/><rect x="1523.0" y="1324.5" width="38.6" height="24.3" fill="#3b4453"/><rect x="1564.0" y="1324.5" width="24.0" height="24.3" fill="#3b4453"/><rect x="1591.6" y="1324.5" width="23.2" height="24.3" fill="#3b4453"/><rect x="1617.6" y="1324.5" width="30.0" height="24.3" fill="#3b4453"/><rect x="1650.9" y="1324.5" width="22.8" height="24.3" fill="#3b4453"/><rect x="1677.3" y="1324.5" width="23.6" height="24.3" fill="#3b4453"/><rect x="761.6" y="1324.5" width="22.4" height="24.3" fill="#5b8cc6"/><rect x="786.9" y="1324.5" width="22.1" height="24.3" fill="#5b8cc6"/><rect x="915.7" y="1324.5" width="22.3" height="24.3" fill="#5b8cc6"/><rect x="981.6" y="1324.5" width="22.4" height="24.3" fill="#5b8cc6"/><rect x="1074.4" y="1324.5" width="22.6" height="24.3" fill="#5b8cc6"/><rect x="1138.8" y="1324.5" width="21.7" height="24.3" fill="#5b8cc6"/><rect x="1182.0" y="1324.5" width="21.8" height="24.3" fill="#5b8cc6"/><rect x="1592.3" y="1324.5" width="21.7" height="24.3" fill="#5b8cc6"/><path d="M673.5,1333 H687.5 M673.5,1337 H687.5 M673.5,1341 H687.5 M676.5,1329.5 V1344.5 M680.5,1329.5 V1344.5 M684.5,1329.5 V1344.5" stroke="#dcdcdc" stroke-width="1.3"/><rect x="700.0" y="1331.0" width="2" height="2" fill="#dcdcdc"/><rect x="700.0" y="1335.2" width="2" height="2" fill="#dcdcdc"/><rect x="700.0" y="1339.4" width="2" height="2" fill="#dcdcdc"/><rect x="704.2" y="1331.0" width="2" height="2" fill="#dcdcdc"/><rect x="704.2" y="1335.2" width="2" height="2" fill="#dcdcdc"/><rect x="704.2" y="1339.4" width="2" height="2" fill="#dcdcdc"/><rect x="708.4" y="1331.0" width="2" height="2" fill="#dcdcdc"/><rect x="708.4" y="1335.2" width="2" height="2" fill="#dcdcdc"/><rect x="708.4" y="1339.4" width="2" height="2" fill="#dcdcdc"/><path d="M721,1335 H729 L725,1339.5 Z" fill="#dcdcdc"/><path d="M838,1335 H846 L842,1339.5 Z" fill="#dcdcdc"/><path d="M879,1335 H887 L883,1339.5 Z" fill="#dcdcdc"/><path d="M943,1335 H951 L947,1339.5 Z" fill="#dcdcdc"/><path d="M1059,1335 H1067 L1063,1339.5 Z" fill="#dcdcdc"/><path d="M1126,1335 H1134 L1130,1339.5 Z" fill="#dcdcdc"/><path d="M1165,1335 H1173 L1169,1339.5 Z" fill="#dcdcdc"/><path d="M1314,1335 H1322 L1318,1339.5 Z" fill="#dcdcdc"/><path d="M1358,1335 H1366 L1362,1339.5 Z" fill="#dcdcdc"/><path d="M1483,1335 H1491 L1487,1339.5 Z" fill="#dcdcdc"/><path d="M1551,1335 H1559 L1555,1339.5 Z" fill="#dcdcdc"/><rect x="740" y="1337.5" width="7.5" height="7.5" fill="#dcdcdc"/><path d="M747.5,1338 V1330" stroke="#dcdcdc" stroke-width="1.4"/><rect x="748.5" y="1329.5" width="7" height="6" fill="none" stroke="#dcdcdc" stroke-width="1.3"/><path d="M765,1336 H771 M768,1333 V1339" stroke="#fff" stroke-width="1.4"/><rect x="771" y="1339" width="10" height="5" fill="#fff"/><path d="M791,1330 V1345 H806" stroke="#fff" stroke-width="1.5" fill="none"/><rect x="791" y="1340" width="4.5" height="5" fill="none" stroke="#fff" stroke-width="1.2"/><circle cx="820" cy="1339" r="6" fill="none" stroke="#dcdcdc" stroke-width="1.4"/><path d="M820,1339 L829,1330 M820,1339 H830" stroke="#dcdcdc" stroke-width="1.3"/><path d="M855,1330 L868,1344" stroke="#e05050" stroke-width="1.3"/><path d="M862,1329 V1345" stroke="#4ccb74" stroke-width="1.3"/><circle cx="862" cy="1337" r="1.6" fill="#2a303a" stroke="#fff" stroke-width="0.8"/><path d="M896,1344 H910 M896,1344 L909,1331" stroke="#dcdcdc" stroke-width="1.4"/><rect x="901" y="1335" width="3.5" height="3.5" fill="#dcdcdc"/><rect x="920" y="1330" width="14" height="14" fill="none" stroke="#fff" stroke-width="1.5"/><rect x="918" y="1328" width="4" height="4" fill="#5cb6f2" stroke="#fff"/><path d="M960,1331.5 H976 M960,1336 H973 M960,1340.5 H976" stroke="#dcdcdc" stroke-width="1.8"/><rect x="960" y="1342.5" width="5" height="3" fill="#dcdcdc"/><rect x="985.0" y="1329.0" width="3" height="3" fill="#fff"/><rect x="985.0" y="1332.0" width="3" height="3" fill="#5b8cc6"/><rect x="985.0" y="1335.0" width="3" height="3" fill="#fff"/><rect x="985.0" y="1338.0" width="3" height="3" fill="#5b8cc6"/><rect x="985.0" y="1341.0" width="3" height="3" fill="#fff"/><rect x="988.0" y="1329.0" width="3" height="3" fill="#5b8cc6"/><rect x="988.0" y="1332.0" width="3" height="3" fill="#fff"/><rect x="988.0" y="1335.0" width="3" height="3" fill="#5b8cc6"/><rect x="988.0" y="1338.0" width="3" height="3" fill="#fff"/><rect x="988.0" y="1341.0" width="3" height="3" fill="#5b8cc6"/><rect x="991.0" y="1329.0" width="3" height="3" fill="#fff"/><rect x="991.0" y="1332.0" width="3" height="3" fill="#5b8cc6"/><rect x="991.0" y="1335.0" width="3" height="3" fill="#fff"/><rect x="991.0" y="1338.0" width="3" height="3" fill="#5b8cc6"/><rect x="991.0" y="1341.0" width="3" height="3" fill="#fff"/><rect x="994.0" y="1329.0" width="3" height="3" fill="#5b8cc6"/><rect x="994.0" y="1332.0" width="3" height="3" fill="#fff"/><rect x="994.0" y="1335.0" width="3" height="3" fill="#5b8cc6"/><rect x="994.0" y="1338.0" width="3" height="3" fill="#fff"/><rect x="994.0" y="1341.0" width="3" height="3" fill="#5b8cc6"/><rect x="997.0" y="1329.0" width="3" height="3" fill="#fff"/><rect x="997.0" y="1332.0" width="3" height="3" fill="#5b8cc6"/><rect x="997.0" y="1335.0" width="3" height="3" fill="#fff"/><rect x="997.0" y="1338.0" width="3" height="3" fill="#5b8cc6"/><rect x="997.0" y="1341.0" width="3" height="3" fill="#fff"/><path d="M1010,1332 H1016 M1013,1329 V1335" stroke="#4ccb74" stroke-width="1.5"/><rect x="1016" y="1335" width="10" height="10" fill="#6fcf8a"/><path d="M1038,1335 L1043,1330 H1051 V1338 L1046,1343 H1038 Z M1038,1335 H1046 V1343 M1046,1335 L1051,1330" stroke="#dcdcdc" stroke-width="1.2" fill="none"/><rect x="1035.5" y="1340.5" width="4.5" height="4.5" fill="none" stroke="#f0a050" stroke-width="1.1"/><path d="M1080,1330 V1344 H1093 M1077.5,1333 L1080,1330 L1082.5,1333 M1090,1341.5 L1093,1344 L1090,1346.5" stroke="#fff" stroke-width="1.5" fill="none"/><path d="M1088,1330 L1085,1336 H1088 L1086,1340 L1091,1334 H1088 Z" fill="#fff"/><path d="M1103,1333 L1106,1330 H1116 V1340 L1113,1343 H1103 Z M1103,1333 H1113 V1343 M1113,1333 L1116,1330" stroke="#dcdcdc" stroke-width="1.1" fill="none" stroke-dasharray="2.5 1.5"/><rect x="1102" y="1332" width="3" height="3" fill="#5cb6f2"/><rect x="1111.5" y="1332" width="3" height="3" fill="#5cb6f2"/><rect x="1102" y="1341.5" width="3" height="3" fill="#5cb6f2"/><rect x="1111.5" y="1341.5" width="3" height="3" fill="#5cb6f2"/><path d="M1149.5,1330 V1338 L1143,1343 M1149.5,1338 L1156,1343 M1149.5,1330 L1143,1336 V1343 L1149.5,1346 L1156,1343 V1336 Z" stroke="#fff" stroke-width="1.2" fill="none"/><circle cx="1149.5" cy="1330" r="1.5" fill="#fff"/><circle cx="1143" cy="1343" r="1.5" fill="#fff"/><circle cx="1156" cy="1343" r="1.5" fill="#fff"/><path d="M1186,1345 L1191,1338 L1192.5,1329 L1194,1338 L1199,1345 L1192.5,1341 Z" fill="#fff"/><circle cx="1199" cy="1333" r="2.7" fill="none" stroke="#fff" stroke-width="1.2"/><path d="M1209,1345 L1214,1338 L1215.5,1329 L1217,1338 L1222,1345 L1215.5,1341 Z" fill="#dcdcdc"/><path d="M1223,1329 L1220,1334 H1223 L1221,1338" stroke="#dcdcdc" stroke-width="1.1" fill="none"/><path d="M1233,1345 L1238,1338 L1239.5,1329 L1241,1338 L1246,1345 L1239.5,1341 Z" fill="#dcdcdc"/><circle cx="1341" cy="1337" r="6" fill="#dcdcdc"/><circle cx="1341" cy="1337" r="2.4" fill="#3b4453"/><rect x="1339.5" y="1328.5" width="3" height="4" fill="#dcdcdc" transform="rotate(0 1341 1337)"/><rect x="1339.5" y="1328.5" width="3" height="4" fill="#dcdcdc" transform="rotate(45 1341 1337)"/><rect x="1339.5" y="1328.5" width="3" height="4" fill="#dcdcdc" transform="rotate(90 1341 1337)"/><rect x="1339.5" y="1328.5" width="3" height="4" fill="#dcdcdc" transform="rotate(135 1341 1337)"/><rect x="1339.5" y="1328.5" width="3" height="4" fill="#dcdcdc" transform="rotate(180 1341 1337)"/><rect x="1339.5" y="1328.5" width="3" height="4" fill="#dcdcdc" transform="rotate(225 1341 1337)"/><rect x="1339.5" y="1328.5" width="3" height="4" fill="#dcdcdc" transform="rotate(270 1341 1337)"/><rect x="1339.5" y="1328.5" width="3" height="4" fill="#dcdcdc" transform="rotate(315 1341 1337)"/><path d="M1383,1329 V1345 M1375,1337 H1391" stroke="#dcdcdc" stroke-width="2"/><rect x="1405" y="1329" width="7" height="16" fill="#dcdcdc"/><path d="M1408,1332 H1412 M1408,1335 H1412 M1408,1338 H1412 M1408,1341 H1412" stroke="#3b4453" stroke-width="1"/><rect x="1501" y="1329" width="14" height="16" fill="none" stroke="#dcdcdc" stroke-width="1.3"/><path d="M1504,1333 H1512 M1504,1337 H1512 M1504,1341 H1512" stroke="#dcdcdc" stroke-width="1.3"/><rect x="1527" y="1330" width="16" height="12" fill="none" stroke="#dcdcdc" stroke-width="1.3"/><rect x="1537" y="1338" width="7" height="7" fill="#dcdcdc"/><rect x="1568" y="1329" width="7" height="7" fill="none" stroke="#dcdcdc" stroke-width="1.2"/><circle cx="1582" cy="1333" r="3.5" fill="none" stroke="#dcdcdc" stroke-width="1.2"/><path d="M1575,1345 L1578.5,1339 L1582,1345 Z" fill="none" stroke="#dcdcdc" stroke-width="1.2"/><circle cx="1603" cy="1337" r="8" fill="#c8d8ee" stroke="#fff" stroke-width="1"/><path d="M1599,1341 L1607,1333" stroke="#5b8cc6" stroke-width="1.5"/><path d="M1622,1335 H1642 V1345 H1626 Z" fill="#f2b53a"/><path d="M1632,1328 V1340 M1624,1334 H1640" stroke="#5cb6f2" stroke-width="1.5"/><path d="M1634,1342 L1637,1345 L1643,1338" stroke="#4ccb74" stroke-width="1.8" fill="none"/><rect x="1654" y="1330" width="16" height="14" fill="none" stroke="#dcdcdc" stroke-width="1.3"/><path d="M1657,1341 L1667,1333 M1663,1333 H1667 V1337 M1657,1337 V1341 H1661" stroke="#dcdcdc" stroke-width="1.2" fill="none"/><path d="M1681,1330 H1700 M1681,1337 H1700 M1681,1344 H1700" stroke="#e8e8e8" stroke-width="2"/></svg>
<div style="position:absolute;left:500px;top:1330px;font-size:12px;color:#e8e8e8;white-space:nowrap;line-height:14px;width:128px;text-align:right;letter-spacing:-0.3px">704077, 197742, 0</div>
<div style="position:absolute;left:639px;top:1330px;font-size:13px;color:#e8e8e8;white-space:nowrap;line-height:15px;"><span style="display:inline-block;width:1em;text-align:center">模</span><span style="display:inline-block;width:1em;text-align:center">型</span></div>
<div style="position:absolute;left:1258px;top:1330px;font-size:12.5px;color:#e8e8e8;white-space:nowrap;line-height:14.5px;letter-spacing:-0.6px">1:1 / 100%</div>
<div style="position:absolute;left:1428px;top:1330px;font-size:13px;color:#e8e8e8;white-space:nowrap;line-height:15px;"><span style="display:inline-block;width:1em;text-align:center">小</span><span style="display:inline-block;width:1em;text-align:center">数</span></div>
<div style="position:absolute;left:732.6px;top:1206px;width:198px;height:14.5px;background:rgba(92,92,92,0.88);border-radius:2px"></div>
<div style="position:absolute;left:732.6px;top:1226px;width:269.6px;height:14.3px;background:rgba(92,92,92,0.88);border-radius:2px"></div>
<div style="position:absolute;left:732.6px;top:1246.4px;width:83px;height:14px;background:rgba(92,92,92,0.88);border-radius:2px"></div>
<div style="position:absolute;left:734px;top:1207px;font-size:12.2px;color:#dedede;white-space:nowrap;line-height:14.2px;font-family:'Liberation Mono',monospace;line-height:14px"><span style="display:inline-block;width:1em;text-align:center">当</span><span style="display:inline-block;width:1em;text-align:center">前</span><span style="display:inline-block;width:1em;text-align:center">设</span><span style="display:inline-block;width:1em;text-align:center">置</span>: <span style="display:inline-block;width:1em;text-align:center">编</span><span style="display:inline-block;width:1em;text-align:center">辑</span><span style="display:inline-block;width:1em;text-align:center">模</span><span style="display:inline-block;width:1em;text-align:center">式</span> = Multiple</div>
<div style="position:absolute;left:734px;top:1227px;font-size:12.2px;color:#dedede;white-space:nowrap;line-height:14.2px;font-family:'Liberation Mono',monospace;line-height:14px"><span style="display:inline-block;width:1em;text-align:center">选</span><span style="display:inline-block;width:1em;text-align:center">择</span><span style="display:inline-block;width:1em;text-align:center">注</span><span style="display:inline-block;width:1em;text-align:center">释</span><span style="display:inline-block;width:1em;text-align:center">对</span><span style="display:inline-block;width:1em;text-align:center">象</span><span style="display:inline-block;width:1em;text-align:center">或</span> [<span style="display:inline-block;width:1em;text-align:center">放</span><span style="display:inline-block;width:1em;text-align:center">弃</span>(U)/<span style="display:inline-block;width:1em;text-align:center">模</span><span style="display:inline-block;width:1em;text-align:center">式</span>(M)]: *<span style="display:inline-block;width:1em;text-align:center">取</span><span style="display:inline-block;width:1em;text-align:center">消</span>*</div>
<div style="position:absolute;left:734px;top:1247.4px;font-size:12.2px;color:#e8e8e8;white-space:nowrap;line-height:14.2px;font-family:'Liberation Mono',monospace;line-height:14px"><span style="display:inline-block;width:1em;text-align:center">命</span><span style="display:inline-block;width:1em;text-align:center">令</span>: *<span style="display:inline-block;width:1em;text-align:center">取</span><span style="display:inline-block;width:1em;text-align:center">消</span>*</div>
<div style="position:absolute;left:667.8px;top:1264.3px;width:58.2px;height:26px;background:#2f3540"></div>
<div style="position:absolute;left:726px;top:1264.3px;width:308.5px;height:26px;background:#bdbdbd;border-radius:2px"></div>
<svg width="1707" height="1355" style="position:absolute;left:0;top:0"><rect x="673.0" y="1269" width="1.4" height="1.4" fill="#aab"/><rect x="673.0" y="1272" width="1.4" height="1.4" fill="#aab"/><rect x="673.0" y="1275" width="1.4" height="1.4" fill="#aab"/><rect x="673.0" y="1278" width="1.4" height="1.4" fill="#aab"/><rect x="673.0" y="1281" width="1.4" height="1.4" fill="#aab"/><rect x="673.0" y="1284" width="1.4" height="1.4" fill="#aab"/><rect x="675.5" y="1269" width="1.4" height="1.4" fill="#aab"/><rect x="675.5" y="1272" width="1.4" height="1.4" fill="#aab"/><rect x="675.5" y="1275" width="1.4" height="1.4" fill="#aab"/><rect x="675.5" y="1278" width="1.4" height="1.4" fill="#aab"/><rect x="675.5" y="1281" width="1.4" height="1.4" fill="#aab"/><rect x="675.5" y="1284" width="1.4" height="1.4" fill="#aab"/><path d="M685,1272.5 L693,1280.5 M693,1272.5 L685,1280.5" stroke="#d8d8d8" stroke-width="1.6"/><path d="M705,1283 L712,1276 M711,1271 Q716,1270 716,1275 Q713,1278 710,1276" stroke="#d8d8d8" stroke-width="2" fill="none"/><rect x="731" y="1271.5" width="14" height="11" fill="none" stroke="#555" stroke-width="1.2"/><path d="M733,1275 L736,1277 L733,1279" stroke="#555" stroke-width="1" fill="none"/><path d="M747,1275.5 H753 L750,1279 Z" fill="#555"/><path d="M1024,1279 H1032 L1028,1274 Z" fill="#555"/></svg>
<div style="position:absolute;left:763px;top:1269px;font-size:13px;color:#6c6c6c;white-space:nowrap;line-height:15px;font-style:italic"><span style="display:inline-block;width:1em;text-align:center">键</span><span style="display:inline-block;width:1em;text-align:center">入</span><span style="display:inline-block;width:1em;text-align:center">命</span><span style="display:inline-block;width:1em;text-align:center">令</span></div>
<svg width="1707" height="1355" style="position:absolute;left:0;top:0"><path d="M0,0 H9 Q1,1 0.8,9 Z" fill="#a8b0b8"/><path d="M1707,0 H1698 Q1706,1 1706.2,9 Z" fill="#a8b0b8"/><rect x="1703" y="79" width="2.6" height="1216" fill="#262c35"/><rect x="1.2" y="79" width="2.7" height="1216" fill="#262c35"/><rect x="0.75" y="0.75" width="1705.5" height="1353.5" rx="8" fill="none" stroke="#1c95de" stroke-width="1.5"/></svg>
</body></html>
